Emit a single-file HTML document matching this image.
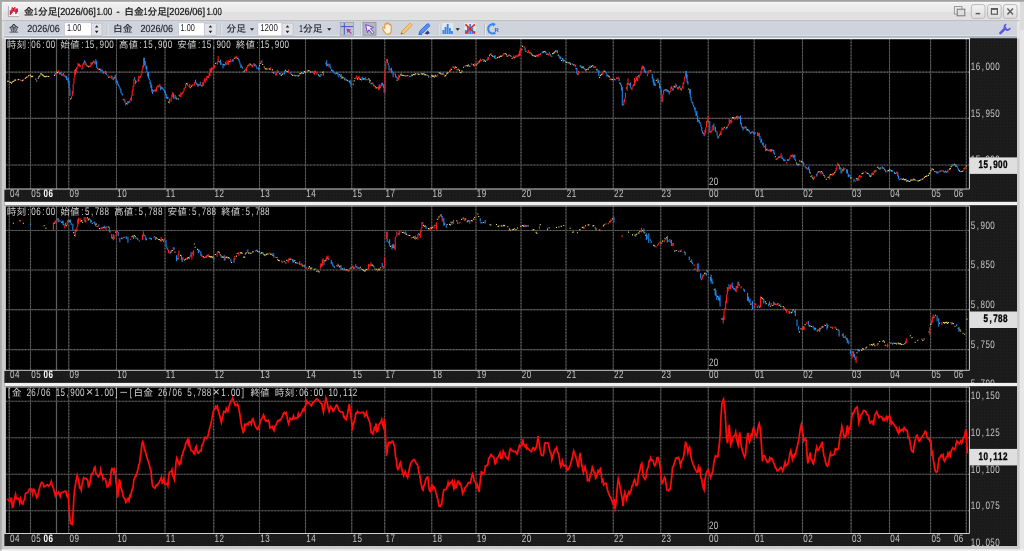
<!DOCTYPE html>
<html lang="ja">
<head>
<meta charset="utf-8">
<title>金1分足[2026/06]1.00 - 白金1分足[2026/06]1.00</title>
<style>
html,body{margin:0;padding:0;background:#cbcbcb;overflow:hidden}
body{width:1024px;height:551px;font-family:"Liberation Sans","IPAGothic",sans-serif}
svg{display:block;position:absolute;left:0;top:0;will-change:transform;filter:blur(0.35px)}
text{white-space:pre}
</style>
</head>
<body>
<svg width="1024" height="551" viewBox="0 0 1024 551" text-rendering="geometricPrecision">
<rect x="0" y="0" width="1024" height="551" fill="#cbcbcb"/>
<defs><linearGradient id="tg" x1="0" y1="0" x2="0" y2="1"><stop offset="0" stop-color="#f1f1f1"/><stop offset="0.5" stop-color="#eaeaea"/><stop offset="0.56" stop-color="#e0e0e0"/><stop offset="1" stop-color="#e1e1e1"/></linearGradient><linearGradient id="bg" x1="0" y1="0" x2="0" y2="1"><stop offset="0" stop-color="#f4f4f4"/><stop offset="1" stop-color="#dcdcdc"/></linearGradient></defs>
<rect x="1019.6" y="0" width="4.4" height="551" fill="#e7e7ea"/>
<rect x="1019.6" y="0" width="4.4" height="30" fill="#dcdcdc"/>
<rect x="1.8" y="549.2" width="1023" height="1.8" fill="#f1f1f1"/>
<rect x="1.8" y="1.8" width="1017.8" height="18.7" fill="url(#tg)"/>
<rect x="1.8" y="20.4" width="2.6" height="18" fill="#dedede"/>
<rect x="1016.8" y="20.4" width="2.8" height="18" fill="#e6e6e6"/>
<rect x="1.8" y="1.8" width="1017.8" height="1" fill="#f8f8f8"/>
<rect x="1.8" y="1.8" width="1" height="18.7" fill="#f4f4f4"/>
<rect x="1018.6" y="1.8" width="1" height="18.7" fill="#f4f4f4"/>
<rect x="0" y="0" width="1024" height="1.7" fill="#a2a2a2"/>
<rect x="0" y="0" width="1.8" height="549.5" fill="#a8a8a8"/>
<rect x="4.4" y="20.4" width="1012.6" height="17.8" fill="#cfd3db"/>
<rect x="1.8" y="20" width="1017.8" height="0.9" fill="#bdbdbd"/>
<rect x="4.4" y="35" width="1012.6" height="1.2" fill="#dde0e6"/>
<rect x="4.4" y="36.2" width="1012.6" height="1.6" fill="#a9aeba"/>
<g><rect x="8.4" y="6.2" width="10.2" height="10.2" fill="#f6f6f6"/><path d="M8.4 6v10.600h10.400" stroke="#9c9c9c" stroke-width="0.8" fill="none"/><path d="M10.4 15V10.5M12.2 13V7.200M14.8 12V7M16.600 13.500V8.500" stroke="#e8202a" stroke-width="1.4"/><path d="M11.300 14V9.500M13.500 11.500V8M15.700 14V9.500M17.500 12V8.500" stroke="#2a50e0" stroke-width="1.1"/></g>
<g fill="#101010" stroke="#101010" stroke-width="0.22"><text x="24" y="14.5" font-family='"Liberation Sans","IPAGothic",sans-serif' font-size="9.74" textLength="9.74" lengthAdjust="spacing">金</text><text x="34" y="14.5" font-family='"Liberation Sans",sans-serif' font-size="10.2" textLength="3.6" lengthAdjust="spacingAndGlyphs">1</text><text x="38" y="14.5" font-family='"Liberation Sans","IPAGothic",sans-serif' font-size="9.74" textLength="19.48" lengthAdjust="spacing">分足</text><text x="57.6" y="14.5" font-family='"Liberation Sans",sans-serif' font-size="10.2" textLength="38.2" lengthAdjust="spacingAndGlyphs">[2026/06]</text><text x="96.6" y="14.5" font-family='"Liberation Sans",sans-serif' font-size="10.2" textLength="15.6" lengthAdjust="spacingAndGlyphs">1.00</text><text x="116.4" y="14.5" font-family='"Liberation Sans",sans-serif' font-size="10.2" textLength="3.2" lengthAdjust="spacingAndGlyphs">-</text><text x="124.3" y="14.5" font-family='"Liberation Sans","IPAGothic",sans-serif' font-size="9.74" textLength="19.48" lengthAdjust="spacing">白金</text><text x="143.8" y="14.5" font-family='"Liberation Sans",sans-serif' font-size="10.2" textLength="3.6" lengthAdjust="spacingAndGlyphs">1</text><text x="147.6" y="14.5" font-family='"Liberation Sans","IPAGothic",sans-serif' font-size="9.74" textLength="19.48" lengthAdjust="spacing">分足</text><text x="166.8" y="14.5" font-family='"Liberation Sans",sans-serif' font-size="10.2" textLength="38.2" lengthAdjust="spacingAndGlyphs">[2026/06]</text><text x="206.6" y="14.5" font-family='"Liberation Sans",sans-serif' font-size="10.2" textLength="15.2" lengthAdjust="spacingAndGlyphs">1.00</text></g>
<rect x="971.4" y="4.6" width="13.6" height="13.8" rx="2.4" fill="url(#bg)" stroke="#b4b4b4" stroke-width="0.9"/>
<rect x="987.6" y="4.6" width="13.6" height="13.8" rx="2.4" fill="url(#bg)" stroke="#b4b4b4" stroke-width="0.9"/>
<rect x="1003.4" y="4.6" width="13.6" height="13.8" rx="2.4" fill="url(#bg)" stroke="#b4b4b4" stroke-width="0.9"/>
<path d="M975.6 13.6h4.6" stroke="#5c5c5c" stroke-width="1.5"/>
<rect x="991.4" y="8.6" width="6" height="5.6" fill="none" stroke="#5c5c5c" stroke-width="1.2"/><path d="M991.4 9h6" stroke="#5c5c5c" stroke-width="1.8"/>
<path d="M1007.4 8.6l5.6 5.8M1013 8.6l-5.6 5.8" stroke="#5c5c5c" stroke-width="1.4"/>
<rect x="954.4" y="6.6" width="7.6" height="7.4" fill="#ececec" stroke="#8e8e8e" stroke-width="0.9"/><rect x="957.2" y="9.2" width="7.6" height="6.6" fill="#dedede" stroke="#777" stroke-width="1"/>
<g stroke="#5a58e2" fill="none" stroke-linecap="round"><path d="M1000.4 33.2l5-5" stroke-width="2.6"/><path d="M1005.6 24.6a3 3 0 1 0 4.2 4.2" stroke-width="1.8"/></g>
<g fill="#202430" stroke="#202430" stroke-width="0.15"><text x="9" y="32.4" font-family='"Liberation Sans","IPAGothic",sans-serif' font-size="9.74" textLength="9.74" lengthAdjust="spacing">金</text><text x="27.2" y="32.4" font-family='"Liberation Sans",sans-serif' font-size="10.2" textLength="32.6" lengthAdjust="spacingAndGlyphs">2026/06</text></g>
<rect x="64.7" y="22.8" width="26.7" height="13" fill="#ffffff" stroke="#c0c4cc" stroke-width="0.6"/>
<rect x="91.4" y="23.2" width="10.6" height="12.2" fill="#e1e3e8" stroke="#b8bcc4" stroke-width="0.6"/>
<path d="M94.9 27.6h3.6l-1.8-2.4zM94.9 30.8h3.6l-1.8 2.4z" fill="#222"/>
<g fill="#1a1a1a"><text x="67" y="30.5" font-family='"Liberation Sans",sans-serif' font-size="10" textLength="14.2" lengthAdjust="spacingAndGlyphs">1.00</text></g>
<rect x="106.8" y="23.4" width="0.8" height="11.4" fill="#b4b8c0"/><rect x="107.6" y="23.4" width="0.8" height="11.4" fill="#eef0f4"/>
<g fill="#202430" stroke="#202430" stroke-width="0.15"><text x="113" y="32.4" font-family='"Liberation Sans","IPAGothic",sans-serif' font-size="9.74" textLength="19.48" lengthAdjust="spacing">白金</text><text x="140.4" y="32.4" font-family='"Liberation Sans",sans-serif' font-size="10.2" textLength="32.6" lengthAdjust="spacingAndGlyphs">2026/06</text></g>
<rect x="178.7" y="22.8" width="26" height="13" fill="#ffffff" stroke="#c0c4cc" stroke-width="0.6"/>
<rect x="204.7" y="23.2" width="11.5" height="12.2" fill="#e1e3e8" stroke="#b8bcc4" stroke-width="0.6"/>
<path d="M208.65 27.6h3.6l-1.8-2.4zM208.65 30.8h3.6l-1.8 2.4z" fill="#222"/>
<g fill="#1a1a1a"><text x="180.6" y="30.5" font-family='"Liberation Sans",sans-serif' font-size="10" textLength="14.2" lengthAdjust="spacingAndGlyphs">1.00</text></g>
<rect x="220.6" y="23.4" width="0.8" height="11.4" fill="#b4b8c0"/><rect x="221.4" y="23.4" width="0.8" height="11.4" fill="#eef0f4"/>
<g fill="#202430" stroke="#202430" stroke-width="0.15"><text x="226.4" y="32.4" font-family='"Liberation Sans","IPAGothic",sans-serif' font-size="9.74" textLength="19.48" lengthAdjust="spacing">分足</text></g>
<path d="M249.9 28.2h4.2l-2.1 2.6z" fill="#222"/>
<rect x="258" y="22.8" width="24" height="13" fill="#ffffff" stroke="#c0c4cc" stroke-width="0.6"/>
<rect x="282" y="23.2" width="11" height="12.2" fill="#e1e3e8" stroke="#b8bcc4" stroke-width="0.6"/>
<path d="M285.7 27.6h3.6l-1.8-2.4zM285.7 30.8h3.6l-1.8 2.4z" fill="#222"/>
<g fill="#1a1a1a"><text x="260.2" y="30.5" font-family='"Liberation Sans",sans-serif' font-size="10" textLength="17.6" lengthAdjust="spacingAndGlyphs">1200</text></g>
<g fill="#202430" stroke="#202430" stroke-width="0.15"><text x="299.2" y="32.4" font-family='"Liberation Sans",sans-serif' font-size="10.2" textLength="3.6" lengthAdjust="spacingAndGlyphs">1</text><text x="303" y="32.4" font-family='"Liberation Sans","IPAGothic",sans-serif' font-size="9.74" textLength="19.48" lengthAdjust="spacing">分足</text></g>
<path d="M327.1 28.2h4.2l-2.1 2.6z" fill="#222"/>
<rect x="337.8" y="23.4" width="0.8" height="11.4" fill="#b4b8c0"/><rect x="338.6" y="23.4" width="0.8" height="11.4" fill="#eef0f4"/>
<rect x="340.2" y="22.4" width="13.3" height="12.8" fill="#c2c6ce" stroke="#9a9ea8" stroke-width="0.8"/><path d="M344.3 23v11.6M340.8 26.6h12.2" stroke="#3f56c8" stroke-width="1"/><path d="M346.4 28.4l5.2 1.4-2 .9 2.2 2.6-1 .8-2.2-2.6-1 1.9z" fill="#9a3cc0"/>
<rect x="360.6" y="23.4" width="0.8" height="11.4" fill="#b4b8c0"/><rect x="361.4" y="23.4" width="0.8" height="11.4" fill="#eef0f4"/>
<rect x="363" y="22.4" width="13" height="12.8" fill="#b3b7c0" stroke="#8c909a" stroke-width="0.8"/><path d="M365.6 24.6l7.8 2.8-3 1.2 3.6 4-1.6 1.4-3.6-4.2-1.4 2.8z" fill="#f4f0ff" stroke="#7a3fd0" stroke-width="1"/>
<path d="M383 29.2c-1.2-1.4 .2-2.6 1.2-1.6l.6 .6v-3.4c0-1.2 1.6-1.2 1.6 0v-1c0-1.2 1.7-1.2 1.7 0v.8c0-1.1 1.6-1.1 1.6 0v1c0-1 1.5-1 1.5 .1v4.6c0 2.4-1.2 4-3.6 4-2 0-3-1.200-4.600-5.100z" fill="#fbf3e4" stroke="#e09a3a" stroke-width="1.1"/>
<path d="M401 34.200l1-3.200 7.600-7.400c.8-.8 3 1.200 2.200 2l-7.600 7.600z" fill="#f6c878" stroke="#e09a3a" stroke-width="0.9"/><path d="M401 34.200l.6-1.800 1.200 1.200z" fill="#555"/>
<path d="M419 33.600l1.200-3 7-6.600c1-.9 3.200 1.300 2.300 2.200l-6.800 6.800z" fill="#5a8ff0" stroke="#2f62d8" stroke-width="0.9"/><path d="M424.600 33.600l3.200-3 2 2.400-2.400 1.400z" fill="#24408c"/><path d="M418.600 34.400h3.400" stroke="#2f62d8" stroke-width="1"/>
<rect x="437.8" y="23.4" width="0.8" height="11.4" fill="#b4b8c0"/><rect x="438.6" y="23.4" width="0.8" height="11.4" fill="#eef0f4"/>
<rect x="442" y="22.8" width="11.4" height="11.6" fill="#e4e7ec"/>
<path d="M443.4 34v-4M445.5 34v-7M447.7 34v-10M449.9 34v-6M452 34v-3" stroke="#2f86f0" stroke-width="1.8"/>
<path d="M455.6 28.2h4.2l-2.1 2.6z" fill="#222"/>
<rect x="464.4" y="22.8" width="11.4" height="11.6" fill="#e4e7ec"/>
<path d="M465.8 34v-4M467.9 34v-7M470.1 34v-10M472.3 34v-6M474.4 34v-3" stroke="#2f86f0" stroke-width="1.8"/>
<path d="M465.4 24.400l9.400 8.800M474.800 24.400l-9.400 8.800" stroke="#f02020" stroke-width="1.5"/>
<rect x="484.2" y="23.4" width="0.8" height="11.4" fill="#b4b8c0"/><rect x="485" y="23.4" width="0.8" height="11.4" fill="#eef0f4"/>
<g fill="none" stroke="#2f86f0"><path d="M495.4 32.600a4.600 4.600 0 1 1 -1.600 -8.200" stroke-width="2"/></g><path d="M492 22.400l3.800 1.600-2.600 2.800z" fill="#2f86f0"/><text x="494.6" y="31.600" font-family='"Liberation Sans",sans-serif' font-size="6" font-weight="bold" fill="#2f66e0">R</text>
<pattern id="dt" width="3.24" height="3.24" patternUnits="userSpaceOnUse"><rect width="3.24" height="3.24" fill="#1c1c1c"/><rect x="0.8" y="0.8" width="0.9" height="0.9" fill="#111111"/></pattern>
<rect x="4.4" y="38.2" width="1012.6" height="507.8" fill="url(#dt)"/>
<rect x="4.4" y="201.8" width="1012.6" height="3.4" fill="#f1f1f1"/>
<rect x="4.4" y="382.9" width="1012.6" height="3.3" fill="#f1f1f1"/>
<clipPath id="cp0"><rect x="5" y="38.1" width="1012" height="163.7"/></clipPath>
<rect x="5.9" y="38.7" width="963.5" height="150.3" fill="#000"/>
<path d="M9.25 38.7V189M30.5 38.7V189M56.5 38.7V189M68.75 38.7V189M116.5 38.7V189M165 38.7V189M213.75 38.7V189M259.5 38.7V189M305.5 38.7V189M351.75 38.7V189M384.75 38.7V189M431.75 38.7V189M476 38.7V189M521 38.7V189M566 38.7V189M613.25 38.7V189M660.75 38.7V189M708.25 38.7V189M754.2 38.7V189M802.5 38.7V189M851.1 38.7V189M889.5 38.7V189M930.6 38.7V189M966.3 38.7V189" stroke="#444444" stroke-width="1.1" fill="none"/>
<path d="M9.25 38.7V189M30.5 38.7V189M56.5 38.7V189M68.75 38.7V189M116.5 38.7V189M165 38.7V189M213.75 38.7V189M259.5 38.7V189M305.5 38.7V189M351.75 38.7V189M384.75 38.7V189M431.75 38.7V189M476 38.7V189M521 38.7V189M566 38.7V189M613.25 38.7V189M660.75 38.7V189M708.25 38.7V189M754.2 38.7V189M802.5 38.7V189M851.1 38.7V189M889.5 38.7V189M930.6 38.7V189M966.3 38.7V189" stroke="#6c6c6c" stroke-width="1.1" stroke-dasharray="0.81 2.43" fill="none"/>
<path d="M56.5 38.7V189" stroke="#5c5c5c" stroke-width="1.2"/>
<path d="M5.9 72.15H969.4M5.9 118.4H969.4M5.9 165H969.4" stroke="#444444" stroke-width="1.1" fill="none"/>
<path d="M5.9 72.15H969.4M5.9 118.4H969.4M5.9 165H969.4" stroke="#6c6c6c" stroke-width="1.1" stroke-dasharray="0.81 2.43" fill="none"/>
<clipPath id="cp1"><rect x="5" y="205.4" width="1012" height="177.5"/></clipPath>
<rect x="5.9" y="206" width="963.5" height="164.3" fill="#000"/>
<path d="M9.25 206V370.3M30.5 206V370.3M56.5 206V370.3M68.75 206V370.3M116.5 206V370.3M165 206V370.3M213.75 206V370.3M259.5 206V370.3M305.5 206V370.3M351.75 206V370.3M384.75 206V370.3M431.75 206V370.3M476 206V370.3M521 206V370.3M566 206V370.3M613.25 206V370.3M660.75 206V370.3M708.25 206V370.3M754.2 206V370.3M802.5 206V370.3M851.1 206V370.3M889.5 206V370.3M930.6 206V370.3M966.3 206V370.3" stroke="#444444" stroke-width="1.1" fill="none"/>
<path d="M9.25 206V370.3M30.5 206V370.3M56.5 206V370.3M68.75 206V370.3M116.5 206V370.3M165 206V370.3M213.75 206V370.3M259.5 206V370.3M305.5 206V370.3M351.75 206V370.3M384.75 206V370.3M431.75 206V370.3M476 206V370.3M521 206V370.3M566 206V370.3M613.25 206V370.3M660.75 206V370.3M708.25 206V370.3M754.2 206V370.3M802.5 206V370.3M851.1 206V370.3M889.5 206V370.3M930.6 206V370.3M966.3 206V370.3" stroke="#6c6c6c" stroke-width="1.1" stroke-dasharray="0.81 2.43" fill="none"/>
<path d="M56.5 206V370.3" stroke="#5c5c5c" stroke-width="1.2"/>
<path d="M5.9 230.5H969.4M5.9 270H969.4M5.9 309.6H969.4M5.9 349.6H969.4" stroke="#444444" stroke-width="1.1" fill="none"/>
<path d="M5.9 230.5H969.4M5.9 270H969.4M5.9 309.6H969.4M5.9 349.6H969.4" stroke="#6c6c6c" stroke-width="1.1" stroke-dasharray="0.81 2.43" fill="none"/>
<clipPath id="cp2"><rect x="5" y="386.4" width="1012" height="159.6"/></clipPath>
<rect x="5.9" y="387" width="963.5" height="146.5" fill="#000"/>
<path d="M9.25 387V533.5M30.5 387V533.5M56.5 387V533.5M68.75 387V533.5M116.5 387V533.5M165 387V533.5M213.75 387V533.5M259.5 387V533.5M305.5 387V533.5M351.75 387V533.5M384.75 387V533.5M431.75 387V533.5M476 387V533.5M521 387V533.5M566 387V533.5M613.25 387V533.5M660.75 387V533.5M708.25 387V533.5M754.2 387V533.5M802.5 387V533.5M851.1 387V533.5M889.5 387V533.5M930.6 387V533.5M966.3 387V533.5" stroke="#444444" stroke-width="1.1" fill="none"/>
<path d="M9.25 387V533.5M30.5 387V533.5M56.5 387V533.5M68.75 387V533.5M116.5 387V533.5M165 387V533.5M213.75 387V533.5M259.5 387V533.5M305.5 387V533.5M351.75 387V533.5M384.75 387V533.5M431.75 387V533.5M476 387V533.5M521 387V533.5M566 387V533.5M613.25 387V533.5M660.75 387V533.5M708.25 387V533.5M754.2 387V533.5M802.5 387V533.5M851.1 387V533.5M889.5 387V533.5M930.6 387V533.5M966.3 387V533.5" stroke="#6c6c6c" stroke-width="1.1" stroke-dasharray="0.81 2.43" fill="none"/>
<path d="M56.5 387V533.5" stroke="#5c5c5c" stroke-width="1.2"/>
<path d="M5.9 401.2H969.4M5.9 437.7H969.4M5.9 474.3H969.4M5.9 510.8H969.4" stroke="#444444" stroke-width="1.1" fill="none"/>
<path d="M5.9 401.2H969.4M5.9 437.7H969.4M5.9 474.3H969.4M5.9 510.8H969.4" stroke="#6c6c6c" stroke-width="1.1" stroke-dasharray="0.81 2.43" fill="none"/>
<g clip-path="url(#cp0)" fill="none" stroke-width="1.1"><path d="M7.51 80.73V81.83M8.32 80.75V81.85M9.94 81.65V82.75M10.75 81.86V82.96M11.56 82.71V83.81M12.37 81.51V82.61M13.18 80.95V82.05M13.99 80.48V81.58M14.8 79.45V80.55M15.61 79.58V80.68M18.04 79.27V80.37M18.85 78.92V80.02M22.09 80.06V81.16M22.9 79.67V80.77M25.33 77.92V79.02M26.14 76.98V78.08M26.95 76.49V77.59M28.57 75.1V76.2M30.19 74.73V75.83M31 75.63V76.73M31.81 76.06V77.16M32.62 75.82V76.92M36.67 80.5V81.6M38.29 77.56V78.66M39.1 76.04V77.14M39.91 75.13V76.23M40.72 73.35V74.45M41.53 73.51V74.61M42.34 74.32V75.42M43.15 74.8V75.9M43.96 75.75V76.85M44.77 76.09V77.19M45.58 76.25V77.35M46.39 75.8V76.9M48.01 75.92V77.02M48.82 75.96V77.06M54.49 74.87V75.97M55.3 73.46V74.56M56.92 71.57V72.67M57.73 72.08V73.18M70.69 98.3V99.4M86.08 63.4V64.5M86.89 65.21V66.31M88.51 66.1V67.2M92.56 62.5V63.6M99.04 68.91V70.01M99.85 68.56V69.66M103.9 72.25V73.35M108.76 76.72V77.82M114.43 77.18V78.28M123.34 99.19V100.29M126.58 103.02V104.12M154.12 90.25V91.35M158.98 86.24V87.34M168.7 101.53V102.63M175.99 96.76V97.86M176.8 98.31V99.41M179.23 94.71V95.81M186.52 83.04V84.14M190.57 87.26V88.36M191.38 85.58V86.68M198.67 84.47V85.57M201.91 85.35V86.45M215.68 62.81V63.91M218.92 60.97V62.07M223.78 64.08V65.18M226.21 63.49V64.59M229.45 60.98V62.08M234.31 57.7V58.8M237.55 57.63V58.73M244.03 71.24V72.34M244.84 69.76V70.86M248.08 65.04V66.14M250.51 63.68V64.78M251.32 64.73V65.83M259.42 65.15V66.25M260.23 62.89V63.99M262.66 63.89V64.99M264.28 66.38V67.48M265.09 68.25V69.35M265.9 68.28V69.38M266.71 68.4V69.5M269.14 68.15V69.25M269.95 68.81V69.91M272.38 69.32V70.42M273.19 71.92V73.02M279.67 73.18V74.28M281.29 75.01V76.11M282.1 73.89V74.99M282.91 73.26V74.36M285.34 69.64V70.74M286.15 70.64V71.74M287.77 71.08V72.18M291.82 73.93V75.03M292.63 74.89V75.99M294.25 74.77V75.87M295.87 74.88V75.98M298.3 75.52V76.62M299.11 74.7V75.8M299.92 72.91V74.01M300.73 73.26V74.36M301.54 72.25V73.35M303.16 73.01V74.11M303.97 71.43V72.53M304.78 71.08V72.18M305.59 72.2V73.3M308.02 70.5V71.6M308.83 70.08V71.18M310.45 71.47V72.57M312.07 71.41V72.51M316.93 73.45V74.55M319.36 75.45V76.55M320.98 74.34V75.44M322.6 71.85V72.95M327.46 64.45V65.55M331.51 69.6V70.7M336.37 72.71V73.81M339.61 74.27V75.37M340.42 75.51V76.61M342.04 76.57V77.67M342.85 77.35V78.45M346.09 79.35V80.45M347.71 80.03V81.13M349.33 81.09V82.19M354.19 80.36V81.46M355 77.91V79.01M357.43 78.31V79.41M359.86 78.29V79.39M360.67 78.95V80.05M363.1 78.71V79.81M363.91 78.07V79.17M368.77 78.33V79.43M370.39 80.24V81.34M371.2 83.08V84.18M375.25 86.16V87.26M376.06 87.5V88.6M376.87 87.18V88.28M380.11 86.53V87.63M397.12 79.6V80.7M397.93 77.6V78.7M400.36 74.4V75.5M401.17 73.52V74.62M401.98 74.86V75.96M402.79 74.7V75.8M403.6 74.92V76.02M405.22 75.24V76.34M407.65 74.99V76.09M410.08 75.69V76.79M411.7 74.55V75.65M412.51 74.63V75.73M413.32 73.96V75.06M414.13 73.71V74.81M414.94 74.19V75.29M415.75 73.24V74.34M418.18 73.58V74.68M418.99 73.92V75.02M421.42 73.2V74.3M422.23 73.61V74.71M423.04 73.3V74.4M423.85 73.27V74.37M424.66 74.17V75.27M425.47 74.08V75.18M427.9 74.95V76.05M428.71 76.38V77.48M431.95 75.11V76.21M432.76 75.83V76.93M433.57 75.56V76.66M434.38 76.39V77.49M435.19 74.78V75.88M436 75.88V76.98M439.24 72.32V73.42M440.05 72.46V73.56M440.86 73.35V74.45M442.48 73.48V74.58M444.91 75.55V76.65M445.72 74.93V76.03M446.53 73.42V74.52M447.34 72.6V73.7M448.15 72.24V73.34M449.77 70.55V71.65M451.39 68.87V69.97M453.01 66.47V67.57M455.44 66.53V67.63M456.25 67.02V68.12M457.06 69.17V70.27M458.68 68.85V69.95M459.49 70.04V71.14M460.3 71.92V73.02M461.11 72.24V73.34M461.92 70.53V71.63M463.54 66.66V67.76M466.78 64.92V66.02M467.59 65.28V66.38M468.4 64.6V65.7M473.26 64.05V65.15M474.07 65.06V66.16M476.5 64.51V65.61M477.31 63.2V64.3M478.93 61.66V62.76M479.74 60.54V61.64M482.98 59.23V60.33M484.6 59.72V60.82M485.41 60.81V61.91M487.03 59.44V60.54M489.46 55.19V56.29M490.27 53.87V54.97M491.89 54.9V56M492.7 55.75V56.85M495.94 57.76V58.86M497.56 57.09V58.19M499.18 56.82V57.92M499.99 55.95V57.05M500.8 55.62V56.72M501.61 55.73V56.83M504.04 53.25V54.35M505.66 53.08V54.18M506.47 54.18V55.28M507.28 55.74V56.84M508.9 54.84V55.94M512.14 57.99V59.09M514.57 57.05V58.15M516.19 55.51V56.61M521.86 48.66V49.76M522.67 45.78V46.88M525.91 50.65V51.75M530.77 52.44V53.54M532.39 54.54V55.64M533.2 55.26V56.36M534.82 55.37V56.47M535.63 55.83V56.93M537.25 55.05V56.15M542.92 51.6V52.7M543.73 51.33V52.43M544.54 50.91V52.01M546.97 53.75V54.85M552.64 53.06V54.16M553.45 52.76V53.86M554.26 52.05V53.15M555.07 51.08V52.18M555.88 50.13V51.23M558.31 54.59V55.69M561.55 59.98V61.08M562.36 58.34V59.44M563.98 59.78V60.88M566.41 61.79V62.89M568.03 62.11V63.21M569.65 62.32V63.42M570.46 63.53V64.63M576.13 68.08V69.18M577.75 73.66V74.76M580.18 65.51V66.61M581.8 67.22V68.32M582.61 66.53V67.63M585.04 68.75V69.85M585.85 70.14V71.24M586.66 68.97V70.07M588.28 68.55V69.65M589.09 66.99V68.09M590.71 66.66V67.76M591.52 66.02V67.12M592.33 65.09V66.19M593.95 66.65V67.75M596.38 69.21V70.31M599.62 76.85V77.95M600.43 74.91V76.01M601.24 74.15V75.25M602.05 73.6V74.7M604.48 70.83V71.93M608.53 75.4V76.5M609.34 76.33V77.43M610.15 78.77V79.87M611.77 79.1V80.2M612.58 78.97V80.07M614.2 78.79V79.89M619.87 82.57V83.67M623.11 104.26V105.36M626.35 87.49V88.59M628.78 83.47V84.57M650.65 70.18V71.28M656.32 79.95V81.05M666.04 88.98V90.08M667.66 90.24V91.34M674.14 85.86V86.96M674.95 86.62V87.72M677.38 87.49V88.59M680.62 88.48V89.58M688.72 88.47V89.57M691.96 101.38V102.48M703.3 132.7V133.8M708.97 121.21V122.31M713.02 125.38V126.48M718.69 136.38V137.48M719.5 134.39V135.49M724.36 126.7V127.8M726.79 127.05V128.15M732.46 116.96V118.06M733.27 117.48V118.58M734.08 117.28V118.38M736.51 116.6V117.7M743.8 127.39V128.49M745.42 126.46V127.56M747.04 129.36V130.46M747.85 129.26V130.36M751.09 132.09V133.19M764.05 146.21V147.31M766.48 149.1V150.2M769.72 149.72V150.82M775.39 156.14V157.24M776.2 158.66V159.76M787.54 159.44V160.54M791.59 155.46V156.56M796.45 162.44V163.54M797.26 163.74V164.84M798.88 163.86V164.96M799.69 160.42V161.52M801.31 160.79V161.89M802.12 161.62V162.72M810.22 172.34V173.44M811.03 175.78V176.88M812.65 177.3V178.4M818.32 171.38V172.48M819.13 171.2V172.3M821.56 171.11V172.21M823.99 175.02V176.12M824.8 176.41V177.51M826.42 178.69V179.79M828.04 176.64V177.74M828.85 176.74V177.84M830.47 174.12V175.22M831.28 174.02V175.12M833.71 173.54V174.64M834.52 172.21V173.31M838.57 164.49V165.59M840.19 167.49V168.59M842.62 169.55V170.65M850.72 177.36V178.46M856.39 178.03V179.13M858.01 178.29V179.39M862.06 173.08V174.18M862.87 172.71V173.81M866.92 172.45V173.55M867.73 172.9V174M870.16 175.87V176.97M870.97 175.28V176.38M871.78 173.42V174.52M874.21 171.34V172.44M875.83 170.33V171.43M877.45 166.76V167.86M879.07 167.83V168.93M880.69 167.48V168.58M883.12 167.53V168.63M884.74 169.26V170.36M887.98 169.88V170.98M888.79 170.06V171.16M889.6 169.17V170.27M891.22 170.28V171.38M892.03 170.5V171.6M895.27 172.96V174.06M900.94 178.49V179.59M902.56 178.97V180.07M903.37 178.25V179.35M904.18 179.05V180.15M904.99 179.37V180.47M905.8 178.83V179.93M906.61 180.59V181.69M907.42 180.05V181.15M909.04 180.99V182.09M909.85 180.97V182.07M910.66 179.61V180.71M911.47 179.5V180.6M912.28 179.51V180.61M913.09 179.38V180.48M913.9 178.62V179.72M914.71 179.39V180.49M917.95 180.14V181.24M918.76 180.47V181.57M919.57 179.97V181.07M920.38 179.4V180.5M922 178.74V179.84M922.81 178.47V179.57M924.43 176.94V178.04M925.24 175.92V177.02M926.05 175.95V177.05M926.86 175.32V176.42M928.48 174.82V175.92M929.29 173.06V174.16M930.1 172.39V173.49M930.91 170.05V171.15M932.53 168.52V169.62M933.34 169.11V170.21M934.96 171.12V172.22M943.06 170.52V171.62M945.49 170.65V171.75M949.54 168.53V169.63M950.35 168.11V169.21M951.16 166.05V167.15M951.97 164.46V165.56M954.4 163.77V164.87M955.21 164.52V165.62M956.02 165.94V167.04M959.26 169.96V171.06M960.07 170.99V172.09M961.69 171.02V172.12M962.5 170.71V171.81M964.12 168.26V169.36M966.55 165.49V166.59" stroke="#ead868"/><path d="M35.86 78.36V80.04M47.2 75.69V77M59.35 72.29V74.6M60.16 72.25V73.95M60.97 72.3V74.39M61.78 74V75.87M63.4 72.96V75.59M64.21 75.36V77.06M65.83 76.19V77.89M66.64 75.79V80.08M68.26 77.82V83.35M69.07 81.1V88.42M69.88 88.42V96.01M75.55 68.89V74.8M79.6 63.87V66.57M82.03 67.88V69.58M84.46 60.15V63.35M94.18 61.1V62.8M95.8 59.23V64.27M96.61 61.21V67.72M97.42 67.4V69.1M100.66 69.11V71.46M102.28 69.68V71.38M103.09 71.22V73.78M105.52 70.72V73.71M106.33 73.21V74.91M112 75.75V79.36M115.24 74.83V78.5M116.05 78.5V83.56M116.86 80.13V81.83M117.67 81.32V84.57M118.48 84.18V85.88M119.29 85.65V87.62M120.1 87.62V89.68M120.91 89.31V92.94M121.72 92.63V94.33M122.53 93.81V95.51M124.96 99.48V102.64M125.77 102.64V105.32M128.2 101.13V103.29M129.01 101.32V103.02M134.68 77.27V79.99M135.49 79.99V84.06M136.3 80.9V82.6M144.4 57.82V65.82M145.21 60.96V65.33M146.02 65.33V68.98M146.83 66.32V71.9M147.64 71.9V76.58M148.45 71.95V78.4M149.26 78.21V79.91M150.07 79.88V84.04M150.88 82.52V87.82M151.69 84.75V91.82M152.5 89.26V94.07M160.6 85.69V90.22M162.22 86.93V88.63M163.03 88.04V89.84M163.84 89.16V90.86M164.65 90.13V92.88M165.46 91.57V95.25M166.27 93.92V98.23M167.08 96.94V98.93M167.89 96.78V99.11M173.56 93.37V98.63M175.18 94.77V99.25M178.42 97.93V99.67M187.33 82.72V85.56M195.43 79.69V83.1M196.24 82.36V84.06M197.05 83.27V84.97M197.86 83.99V86.67M200.29 81.82V85.81M219.73 60.94V62.64M220.54 59.83V64.67M222.97 63.87V68.42M224.59 63.94V65.64M227.83 62.24V64.52M231.07 60.56V62.26M232.69 59.37V61.85M238.36 58.18V60.29M239.17 59.48V62.35M239.98 62.35V64.54M240.79 64.54V67.7M242.41 66.65V68.67M245.65 68.8V70.5M249.7 63.36V65.49M254.56 64.3V66.29M256.18 65.17V67.45M256.99 67.31V69.01M258.61 67.37V70.35M261.85 60.2V63.36M274 71.53V74.04M278.05 70.72V72.96M280.48 73.25V74.5M284.53 71.11V74.4M290.2 72.08V73.83M295.06 75.23V76.48M296.68 75.06V76.31M302.35 72.24V73.49M309.64 70.25V71.5M312.88 71.34V72.59M313.69 72.5V73.75M315.31 70.38V72.91M318.55 74.11V76.02M320.17 75.67V76.92M323.41 71.05V75.46M325.84 62.79V64.49M326.65 60.17V66.48M328.27 64.29V65.99M329.89 63.79V66.49M330.7 66.49V68.75M332.32 69.81V71.51M333.13 70.18V71.88M333.94 71.51V73.21M334.75 72.56V73.81M335.56 73.2V74.45M337.18 72.29V73.88M337.99 72.13V76.09M338.8 75.95V77.2M341.23 74.1V78.95M343.66 76.84V78.09M344.47 77.98V80.24M346.9 79.45V80.7M350.14 79.86V83.66M350.95 82.19V86.77M362.29 76.81V79.45M364.72 78.39V79.64M366.34 78.97V80.22M367.96 79.03V80.28M369.58 78.88V82.93M372.82 82.87V84.57M373.63 84.43V86.13M377.68 87.04V88.29M379.3 84.17V89.4M381.73 82.71V85.88M382.54 82.86V85.26M383.35 84.34V87.66M384.16 85.51V92.8M387.4 59.03V62.88M388.21 62.68V65.47M389.02 65.42V69.95M390.64 68.42V70.12M391.45 67.76V73.24M392.26 70.43V72.13M393.07 72.1V77.34M395.5 73.57V77.14M396.31 76.28V78.22M399.55 75.4V77.5M404.41 74.94V76.19M409.27 76.03V77.28M410.89 75.66V76.91M419.8 73.42V74.67M426.28 74.4V75.65M431.14 75.96V77.6M437.62 74.48V75.73M441.67 73.29V74.54M443.29 72.46V74.79M453.82 66.64V67.89M465.16 65.6V66.85M469.21 65.15V67M470.02 65.49V67.1M475.69 63.65V64.9M481.36 59.92V61.17M483.79 59.78V62.01M493.51 56.08V57.33M494.32 55.52V58.62M495.13 55.17V57.44M510.52 55.07V56.41M525.1 48V50.55M527.53 51.63V52.88M529.15 51.77V53.02M529.96 52.38V53.63M531.58 52.99V54.89M534.01 55.26V56.51M539.68 53.83V55.08M542.11 52.06V53.31M545.35 50.66V53.04M546.16 52.49V53.74M547.78 53.24V54.52M549.4 52.33V54.17M550.21 54.09V55.94M551.83 55.69V56.94M556.69 50.68V52.36M557.5 50.19V53.15M559.12 55.14V57.17M559.93 56.78V58.99M560.74 56.61V59.32M563.17 58.57V62.5M564.79 59.99V61.24M565.6 60.93V63.01M568.84 62.21V63.46M572.08 63.2V64.45M572.89 63.71V64.96M573.7 64.05V65.75M575.32 65.02V67M576.94 67.86V73.89M580.99 65.33V67.55M583.42 66.3V68.5M584.23 67.67V68.96M587.47 68.87V70.12M589.9 65.62V68.27M593.14 65.32V66.57M597.19 68.45V70.56M598 70.49V72.19M598.81 70.18V75.94M605.29 71.11V72.36M606.1 72.08V73.82M606.91 73.82V76.39M607.72 74.88V76.58M615.01 78.79V80.49M617.44 77.41V79.11M619.06 78.08V81M620.68 83.06V85.5M621.49 84.63V90.43M622.3 86.64V105.4M629.59 83.75V85.45M630.4 82.51V87.6M631.21 87.31V89.29M633.64 84.22V85.92M638.5 75.08V76.78M643.36 66.11V68.5M644.17 67.31V72.23M644.98 69.45V71.15M645.79 71.05V73.43M652.27 73.97V78.73M653.08 77.75V82.42M653.89 79.22V85.45M654.7 82.57V85.69M655.51 84.14V85.84M657.94 78.5V83.33M658.75 80.2V82.99M659.56 82.77V88.26M660.37 86.12V89.01M661.18 88.69V94.61M661.99 94.61V102.29M664.42 89.4V91.1M665.23 89.46V91.16M666.85 89.53V91.8M668.47 90.5V92.2M669.28 91.23V94.43M672.52 88.49V90.57M676.57 84.66V86.86M679 86.52V88.22M679.81 85.65V88.61M686.29 70.91V78.43M687.1 74.61V82.85M687.91 81.36V84.74M689.53 89.02V93.44M690.34 89.29V97.52M691.15 96.63V100.97M692.77 101.93V104.65M693.58 104.65V106.98M694.39 106.88V109.44M695.2 107.46V112.41M696.01 112.41V116.16M696.82 110.63V116.03M697.63 115.67V121.96M698.44 119.85V121.55M699.25 120.25V123.23M700.06 122.02V123.73M700.87 123.73V126.71M701.68 126.71V130.6M702.49 130.6V133.33M704.11 133.25V136.35M709.78 121.76V132.67M713.83 123.51V130.4M715.45 126.82V132.31M717.07 132.05V135.5M717.88 135.5V138.81M725.98 127.9V129.6M730.84 119.89V122.37M735.7 117.07V118.77M738.94 115.91V117.61M739.75 116.97V119.12M740.56 115.54V124M741.37 122.71V126.39M742.18 126.27V127.97M742.99 126.92V130.62M746.23 127.01V129.55M748.66 129.46V131.16M749.47 130.56V132.26M750.28 132V134.17M752.71 131.08V132.78M753.52 131.93V133.63M754.33 132.81V135.29M755.14 132V133.7M757.57 132.14V136.01M759.19 132.77V136.54M760 135.73V139.9M760.81 139.9V142.73M761.62 138.79V142.8M762.43 142.8V144.68M763.24 142.83V146.17M765.67 144.35V151.29M768.1 149.42V151.12M771.34 149.08V151.8M772.15 149.4V151.1M772.96 149.56V151.26M773.77 150.02V153.61M774.58 152.78V154.48M778.63 156.3V158.12M781.87 155.37V158.95M782.68 157.49V159.19M783.49 158.81V160.8M784.3 159.54V161.3M785.11 159.31V161.09M788.35 159.19V160.89M793.21 155.01V158.2M794.02 155.29V156.99M794.83 154.39V159.93M795.64 159.61V161.31M798.07 164.29V166.23M802.93 161.49V163.19M803.74 162.51V166.39M806.17 166.89V168.72M807.79 168.06V169.77M808.6 166.51V169.55M809.41 168.68V172.97M811.84 174.98V177.14M813.46 177.85V179.91M816.7 173.73V176.39M819.94 171.3V172.55M822.37 171.66V174.32M839.38 165.04V169.45M841 168.04V173.61M844.24 168.48V169.73M846.67 169.13V173.58M847.48 169.46V173.62M848.29 173.62V177.29M849.1 174.68V176.38M849.91 175.1V176.8M851.53 176.97V178.26M853.96 178.77V181.85M857.2 178.29V180.92M859.63 175.09V177.12M868.54 172.93V174.18M869.35 174.18V175.88M873.4 172.98V174.72M878.26 166.77V168.02M879.88 167.75V170.05M882.31 166.28V168.62M883.93 167.66V168.91M885.55 169.81V172.24M887.17 171.33V172.58M890.41 169.42V170.67M892.84 170.45V171.7M894.46 171.67V173.95M897.7 171.93V176.55M898.51 175.42V178.81M899.32 178.56V180.26M901.75 178.53V179.78M908.23 179.89V181.14M915.52 179.57V180.82M917.14 180.14V181.39M936.58 171.36V173.23M938.2 171.55V173.17M939.82 170.45V172.16M941.44 170.14V171.39M943.87 170.96V172.21M944.68 171.59V172.84M946.3 171.2V172.89M952.78 164.95V166.2M956.83 164.58V166.53M957.64 166.53V168.38M958.45 168.38V170.54M960.88 171.1V172.35" stroke="#1a86f0"/><path d="M20.47 79.55V80.8M23.71 79.36V80.61M27.76 76.1V77.96M29.38 74.74V75.99M56.11 73.18V74.43M58.54 70.32V72.63M62.59 74.15V75.87M65.02 74.41V76.83M67.45 78.86V80.56M71.5 96.28V98.85M72.31 90.89V96.28M73.12 83.96V93.79M73.93 77.97V83.96M74.74 70.08V77.97M76.36 67.21V72.22M77.17 67.23V68.93M77.98 62.88V67.29M78.79 63.87V66.05M80.41 65.33V67.03M82.84 63.7V68.76M83.65 61.92V64.94M85.27 61.34V65.31M87.7 65.27V66.97M89.32 65.58V67.28M90.13 65.33V67.03M90.94 61.98V66.15M91.75 63.05V65.11M93.37 60.53V63.05M94.99 61.54V64.4M98.23 68.31V70.25M101.47 69.8V71.5M104.71 71.34V73.04M107.95 74.75V76.45M109.57 76.35V78.05M111.19 75.46V78.19M112.81 77.98V79.68M113.62 77.38V80.36M124.15 98.76V100.46M127.39 101.13V104.78M129.82 100.05V102.4M130.63 97.89V100.05M131.44 95.5V100.92M132.25 89.93V95.96M133.06 85.69V90.96M133.87 79.09V86.86M137.92 79.41V81.2M138.73 75.74V81.81M139.54 76.82V78.52M140.35 76.07V77.77M141.16 73.75V76.27M141.97 69.71V73.75M142.78 65.42V69.71M143.59 57.82V67.54M153.31 90.19V91.89M154.93 89.36V91.06M155.74 88.78V91.98M156.55 86.87V91.16M157.36 85.68V87.38M158.17 84.76V86.46M159.79 84.07V86.79M161.41 86.4V89.15M169.51 98.5V103.51M171.13 97.38V101.67M171.94 94.26V97.38M172.75 92.05V97.04M180.04 94.93V96.93M180.85 92.37V97.09M181.66 93.17V94.87M182.47 92.31V94.01M183.28 91.18V92.88M184.09 88.28V91.35M184.9 87.14V88.84M185.71 83.68V88.05M188.95 85.62V87.32M189.76 83.99V87.81M192.19 84.59V86.29M193 84.18V85.88M194.62 82.2V85.54M199.48 83.89V85.59M201.1 84.41V86.11M202.72 82.13V85.9M203.53 81.81V85.85M204.34 78.22V81.81M205.15 79.7V83.34M205.96 78.34V80.04M206.77 76.13V80.64M207.58 76.01V77.71M208.39 75.62V77.95M209.2 73.05V75.62M210.01 68.35V76.03M210.82 68.76V71.94M211.63 67.13V72.41M212.44 67.94V69.64M213.25 66.85V68.55M214.06 65.36V67.55M214.87 65V68.1M217.3 61.58V64.68M218.11 56.28V61.58M221.35 62.98V65.02M225.4 61.59V64.95M227.02 60.15V64.04M228.64 60.29V64.9M230.26 58.87V62.37M233.5 59.2V61.14M235.12 56.62V58.32M235.93 56.95V59.04M236.74 55.74V58.34M241.6 64.4V67.7M246.46 67.19V71.4M247.27 66.24V67.94M248.89 63.87V66.4M252.13 64.82V67.76M252.94 64.57V66.87M253.75 63.11V64.81M255.37 64.09V66.29M261.04 60.75V63.44M267.52 68.25V69.83M270.76 67.28V69.36M275.62 73.59V75.39M276.43 72.21V75.32M277.24 69.67V72.92M288.58 69.6V72.75M291.01 73.31V74.56M297.49 74.95V76.2M307.21 69.66V72.05M314.5 70.65V74.78M316.12 71.84V73.09M321.79 73.67V75.37M329.08 63.49V67.72M345.28 77.6V78.85M351.76 83.81V85.06M353.38 83.34V85.29M355.81 77.61V79.31M356.62 75.45V78.12M358.24 76.65V78.86M359.05 75.71V79.96M361.48 78.44V80.87M365.53 77.22V80.14M372.01 82.13V84.01M374.44 85.17V86.42M378.49 86.21V90.25M380.92 84.32V87.08M384.97 69.23V92.8M385.78 61.44V69.23M386.59 59.03V61.44M389.83 69.46V72.15M393.88 72.87V74.84M398.74 74.65V80.29M406.03 75.42V76.67M406.84 74.88V76.13M417.37 73.17V74.49M427.09 74.42V75.67M436.81 74.99V76.43M444.1 74.22V75.47M450.58 68.8V71.1M454.63 66.87V69.05M457.87 69.13V70.49M465.97 65.03V66.59M471.64 63.31V64.88M474.88 63.21V66.6M478.12 61.01V63.75M480.55 58.75V61.09M487.84 56.81V59.99M488.65 57.06V59.68M491.08 53.31V54.91M498.37 56.58V57.83M502.42 54.98V56.28M503.23 54.16V55.41M504.85 53.09V54.34M508.09 55.37V56.62M509.71 54.61V55.86M511.33 55.75V57M512.95 56.73V58.54M513.76 55.38V57.97M515.38 55.78V58.08M517 56.06V57.47M517.81 54.69V56.39M518.62 53.87V56.46M519.43 50.64V55.89M520.24 48.3V55.26M521.05 49.33V51.35M524.29 46.48V48.35M528.34 50.11V53.01M536.44 54.73V56.38M538.06 54.31V57.26M538.87 54.08V55.81M540.49 52.94V54.84M548.59 54.06V55.4M551.02 55.39V56.64M574.51 63.92V65.62M578.56 70.87V74.21M594.76 66.34V68.04M595.57 66.28V67.98M602.86 72.22V74.48M603.67 70.15V72.22M610.96 78.33V79.58M613.39 79.01V80.46M616.63 77.2V79.2M618.25 76.73V78.45M623.92 99.79V104.81M624.73 98.09V101.94M625.54 92.81V98.09M627.16 83.08V91.1M627.97 78.61V84.61M632.02 87.58V90.24M632.83 85.27V87.58M634.45 77.98V85.71M635.26 79.94V83.71M636.07 76.29V80.71M636.88 77.77V81.1M637.69 75.9V80.9M639.31 75.36V78.33M640.12 74.09V75.79M640.93 70.4V74.53M641.74 66.63V70.4M642.55 65.47V69.2M647.41 73.74V76.27M648.22 70.22V73.74M649.84 69.99V71.69M657.13 78.5V80.5M662.8 94.6V101.85M663.61 89.91V94.6M670.09 90.74V92.44M670.9 87V91.37M671.71 85.73V88.97M673.33 87.43V90.3M675.76 83.54V87.17M678.19 87.02V90.03M681.43 87.95V91.11M682.24 86.15V87.95M683.05 82.58V88.94M683.86 81.07V84.16M684.67 76.6V81.07M685.48 70.91V76.76M704.92 130.1V135.17M705.73 127.38V132.87M706.54 121.05V127.38M707.35 119.45V122.32M708.16 115.65V119.45M710.59 131.27V132.97M711.4 130.62V132.32M712.21 126.26V131.13M716.26 130.63V132.33M720.31 132.26V134.94M721.12 130.4V135.37M721.93 127.49V130.4M722.74 128.24V129.94M723.55 127.51V129.21M727.6 125.87V127.6M728.41 124.14V125.87M729.22 119V124.14M730.03 119.89V123.81M731.65 119.34V123.14M734.89 117.48V119.69M737.32 115.61V119.73M738.13 116V117.7M744.61 126.84V128.54M751.9 131.22V132.92M758.38 133.29V136.27M764.86 145.86V147.56M767.29 148.57V150.74M768.91 149.87V151.57M770.53 149.08V152.33M777.01 158.09V159.79M777.82 157.38V159.08M779.44 155.98V158.12M780.25 155.67V157.73M781.06 153.29V155.67M786.73 161.82V163.52M789.16 158.81V160.51M789.97 156.84V159.24M790.78 155.09V156.84M792.4 154.28V156.46M805.36 166.26V167.96M806.98 167.5V169.2M814.27 176.33V178.48M817.51 172.56V174.39M820.75 171.12V174.26M823.18 173.37V175.07M829.66 174.65V179.48M832.09 174.11V175.93M832.9 172.96V175M835.33 170.16V172.76M836.14 167.98V170.71M836.95 165.31V168.78M837.76 162.47V165.44M841.81 170.7V173.2M843.43 167.22V171.27M845.05 167.82V169.31M855.58 180.62V181.87M858.82 176.24V180.77M860.44 175.87V177.57M861.25 175.65V177.35M863.68 172.3V173.55M865.3 171.24V172.49M872.59 172.57V174.79M875.02 169.84V172.54M896.08 172.33V174.03M896.89 171.57V173.27M921.19 179.11V180.36M923.62 177.68V179.02M931.72 168.25V170.6M937.39 171.55V173.87M940.63 170.57V171.85M947.11 171.17V172.42M947.92 169.18V172.87M953.59 164.62V165.87M963.31 170.32V171.57M964.93 167.34V169.74M965.74 166.41V167.66" stroke="#ff1a1a"/></g>
<g clip-path="url(#cp1)" fill="none" stroke-width="1.1"><path d="M54.22 222.86V223.96M61.51 221.76V222.86M66.37 225.06V226.16M67.99 220.35V221.45M69.61 220.54V221.64M73.66 232.09V233.19M74.47 234.82V235.92M76.09 230.28V231.38M80.95 220.79V221.89M81.76 220.02V221.12M82.57 221.64V222.74M85 220.28V221.38M87.43 217.28V218.38M88.24 219.29V220.39M89.05 218.35V219.45M92.29 222.68V223.78M96.34 223.54V224.64M97.15 226.01V227.11M99.58 228.1V229.2M101.2 227.47V228.57M103.63 227.02V228.12M108.49 226.49V227.59M112.54 237.51V238.61M115.78 231.58V232.68M121.45 237.73V238.83M131.98 236.18V237.28M132.79 235.38V236.48M134.41 234.88V235.98M135.22 235.97V237.07M136.03 237.52V238.62M144.13 234.65V235.75M149.8 237.64V238.74M151.42 238.42V239.52M156.28 237.25V238.35M157.09 238.14V239.24M158.71 238.96V240.06M159.52 238.93V240.03M160.33 239.83V240.93M161.95 239.33V240.43M162.76 239.25V240.35M170.86 252.01V253.11M171.67 250.39V251.49M172.48 249.92V251.02M174.91 251.47V252.57M177.34 258.26V259.36M180.58 254.79V255.89M184.63 259.38V260.48M185.44 258.65V259.75M187.06 258.35V259.45M187.87 257.32V258.42M188.68 257.1V258.2M194.35 243.44V244.54M195.16 246.68V247.78M197.59 248.84V249.94M203.26 255.99V257.09M204.07 257.08V258.18M207.31 255.23V256.33M208.93 255.58V256.68M209.74 256.03V257.13M210.55 256.28V257.38M211.36 256.12V257.22M212.17 257.15V258.25M212.98 256.36V257.46M215.41 253.91V255.01M218.65 251.31V252.41M219.46 252.25V253.35M220.27 254.36V255.46M221.89 256.7V257.8M222.7 256.34V257.44M223.51 256.72V257.82M225.94 257.09V258.19M226.75 256.58V257.68M228.37 257.1V258.2M229.18 257.58V258.68M231.61 261.82V262.92M236.47 255.55V256.65M237.28 252.96V254.06M240.52 252.28V253.38M241.33 252.3V253.4M242.14 252.71V253.81M243.76 256.55V257.65M244.57 256.53V257.63M245.38 253.39V254.49M246.19 252.28V253.38M248.62 252.62V253.72M250.24 252.69V253.79M251.05 252.75V253.85M252.67 251.37V252.47M256.72 249.76V250.86M257.53 250.75V251.85M259.15 251.3V252.4M260.77 252.74V253.84M261.58 252.36V253.46M262.39 252.38V253.48M264.01 254.1V255.2M264.82 254.76V255.86M266.44 253.82V254.92M267.25 253.46V254.56M268.06 253.44V254.54M270.49 253.41V254.51M271.3 253.95V255.05M272.92 255V256.1M276.97 257V258.1M277.78 259.07V260.17M278.59 259.93V261.03M279.4 260.13V261.23M284.26 260.75V261.85M286.69 259.66V260.76M289.12 258.84V259.94M290.74 258.87V259.97M294.79 260.06V261.16M295.6 262.05V263.15M297.22 262.43V263.53M302.08 264.43V265.53M302.89 265.58V266.68M308.56 267.77V268.87M309.37 266.08V267.18M310.18 267.45V268.55M310.99 268.15V269.25M311.8 267.51V268.61M314.23 268.81V269.91M316.66 270.71V271.81M318.28 270.39V271.49M319.09 271.28V272.38M324.76 260.33V261.43M325.57 259.76V260.86M327.19 257.54V258.64M336.91 265.22V266.32M338.53 264.71V265.81M339.34 266.36V267.46M340.15 265.72V266.82M342.58 268.6V269.7M345.01 269.03V270.13M346.63 269.17V270.27M348.25 270.27V271.37M350.68 267.5V268.6M352.3 266.47V267.57M353.92 267.58V268.68M357.97 267.5V268.6M360.4 266.67V267.77M361.21 268.39V269.49M362.83 269.01V270.11M363.64 269.95V271.05M364.45 270.5V271.6M365.26 270.29V271.39M366.07 268.68V269.78M366.88 268.9V270M371.74 264.4V265.5M372.55 264.62V265.72M374.98 268.5V269.6M376.6 268.66V269.76M378.22 269.16V270.26M379.03 268.42V269.52M379.84 269.39V270.49M380.65 267.26V268.36M390.37 245.78V246.88M402.52 231.92V233.02M403.33 231.74V232.84M404.95 232.46V233.56M406.57 233.84V234.94M409 234.93V236.03M409.81 234.95V236.05M413.05 236.94V238.04M413.86 236.36V237.46M414.67 237.76V238.86M416.29 237.6V238.7M419.53 234.24V235.34M422.77 222.39V223.49M423.58 224.79V225.89M424.39 225.68V226.78M425.2 225.56V226.66M428.44 228.05V229.15M429.25 228.49V229.59M430.87 227.37V228.47M431.68 227.57V228.67M432.49 226.65V227.75M434.92 224.72V225.82M437.35 218.92V220.02M438.97 216.29V217.39M440.59 214.46V215.56M447.07 223.95V225.05M449.5 223.8V224.9M450.31 224.3V225.4M451.12 221.8V222.9M452.74 221.71V222.81M456.79 220.34V221.44M457.6 222.52V223.62M461.65 218.79V219.89M463.27 217.56V218.66M464.89 219.38V220.48M465.7 218.38V219.48M467.32 221.15V222.25M468.13 220.08V221.18M471.37 219.93V221.03M472.18 220.33V221.43M473.8 218.55V219.65M474.61 216.89V217.99M477.85 213.43V214.53M478.66 215.91V217.01M481.09 222.17V223.27M483.52 221.98V223.08M490 224.27V225.37M490.81 224.51V225.61M496.48 223.95V225.05M498.1 225.93V227.03M498.91 225.42V226.52M501.34 225.31V226.41M502.96 225.51V226.61M503.77 224.87V225.97M504.58 225.06V226.16M507.82 226.14V227.24M509.44 228.59V229.69M510.25 229.82V230.92M512.68 229.22V230.32M513.49 228.92V230.02M514.3 228.2V229.3M515.92 229.03V230.13M517.54 227.38V228.48M520.78 225.92V227.02M522.4 224.96V226.06M523.21 225.1V226.2M524.02 225.99V227.09M525.64 225.38V226.48M528.07 225.33V226.43M532.93 229.47V230.57M533.74 229.09V230.19M536.17 231.83V232.93M536.98 232.93V234.03M540.22 224.03V225.13M547.51 228.58V229.68M549.13 227.27V228.37M556.42 226.94V228.04M558.85 226.41V227.51M561.28 225.87V226.97M563.71 225.02V226.12M570.19 227.64V228.74M572.62 231.72V232.82M573.43 231.43V232.53M577.48 232.18V233.28M579.91 229.09V230.19M582.34 226.87V227.97M583.15 227.09V228.19M585.58 225.17V226.27M588.01 224.48V225.58M588.82 224.35V225.45M592.87 225.45V226.55M593.68 225.12V226.22M596.11 228.6V229.7M599.35 229.5V230.6M603.4 225.37V226.47M604.21 224.25V225.35M609.88 221.37V222.47M612.31 218.36V219.46M628.51 231.56V232.66M632.56 234.32V235.42M634.99 234.6V235.7M636.61 233.87V234.97M638.23 232.48V233.58M639.04 232.46V233.56M639.85 230.95V232.05M642.28 229.89V230.99M643.09 230.5V231.6M644.71 232.19V233.29M645.52 234.77V235.87M653.62 244.81V245.91M654.43 245.17V246.27M660.91 242.61V243.71M662.53 240.62V241.72M664.96 237.7V238.8M666.58 237.25V238.35M674.68 250.58V251.68M676.3 249.98V251.08M680.35 250.69V251.79M684.4 251.5V252.6M690.88 260.86V261.96M694.93 268.38V269.48M704.65 272.84V273.94M707.08 270.28V271.38M714.37 289.15V290.25M717.61 295.91V297.01M733.81 288.2V289.3M750.82 303.62V304.72M757.3 306.43V307.53M759.73 306.53V307.63M761.35 296.89V297.99M762.16 297.8V298.9M762.97 298.52V299.62M765.4 301.33V302.43M766.21 303.03V304.13M770.26 305.63V306.73M772.69 304.99V306.09M775.93 303.72V304.82M777.55 303.48V304.58M779.17 304.85V305.95M780.79 305.93V307.03M783.22 305.98V307.08M784.03 307.55V308.65M785.65 309.48V310.58M791.32 312.09V313.19M792.13 311.5V312.6M792.94 309.6V310.7M799.42 331.37V332.47M801.04 328.32V329.42M805.09 324.09V325.19M809.14 325.16V326.26M809.95 325.61V326.71M811.57 325.88V326.98M815.62 328.34V329.44M817.24 330.38V331.48M818.86 329.62V330.72M820.48 328.24V329.34M822.1 326.36V327.46M822.91 326.29V327.39M825.34 325.02V326.12M831.01 326.69V327.79M836.68 328.81V329.91M838.3 329.45V330.55M842.35 334.43V335.53M843.97 336.6V337.7M856.93 352.16V353.26M857.74 349.5V350.6M859.36 350.15V351.25M861.79 349.79V350.89M862.6 348.17V349.27M863.41 348.61V349.71M865.84 347.49V348.59M866.65 346.67V347.77M869.89 344.48V345.58M871.51 343.95V345.05M872.32 344.75V345.85M873.13 343.85V344.95M873.94 343.61V344.71M874.75 345.13V346.23M877.99 343.28V344.38M879.61 341.02V342.12M882.85 340.7V341.8M883.66 340.27V341.37M884.47 341.62V342.72M885.28 344.64V345.74M890.95 342.53V343.63M894.19 342.81V343.91M895.81 342.78V343.88M896.62 343.48V344.58M898.24 342.57V343.67M899.05 343.42V344.52M899.86 342.95V344.05M900.67 343.36V344.46M901.48 343.99V345.09M903.1 344.02V345.12M904.72 343.17V344.27M910.39 335.13V336.23M912.01 337.11V338.21M915.25 341.77V342.87M917.68 339.76V340.86M922.54 339.71V340.81M924.16 338.39V339.49M929.02 331.48V332.58M930.64 323.82V324.92M933.88 316.7V317.8M935.5 314.69V315.79M939.55 322.67V323.77M943.6 321.88V322.98M944.41 322.58V323.68M945.22 321.96V323.06M946.03 322.03V323.13M946.84 321.82V322.92M947.65 322.82V323.92M948.46 321.98V323.08M952.51 322.71V323.81M953.32 323.05V324.15M954.94 325.7V326.8M958.18 327.68V328.78M959.8 329.03V330.13M960.61 330.52V331.62M963.04 332.76V333.86M964.66 333.69V334.79M13.4 222.7V223.8M20 220.2V221.3M23.4 222.7V223.8M30.5 223.9V225M44.2 225.2V226.3M45.9 227.7V228.8M966.9 318.6V319.8" stroke="#ead868"/><path d="M58.27 218.3V222.21M59.89 220.21V222.02M62.32 220.64V223.37M63.13 220.68V225.04M63.94 223.89V225.44M65.56 222.7V225.72M70.42 219.53V222.65M71.23 222.65V225.25M72.85 223.78V230.74M89.86 218.84V220.09M90.67 219.62V222.77M91.48 220.15V222.09M93.91 221.81V223.06M94.72 221.49V224.71M95.53 223.59V226.2M98.77 224.39V226.27M102.01 228.02V229.37M104.44 225.85V228.49M106.87 226.35V227.6M109.3 226.73V231.91M111.73 234.05V238.48M117.4 230.89V232.14M118.21 231.96V236.03M119.83 237.9V242.2M122.26 237.97V239.22M124.69 236.71V237.96M126.31 236.13V239.2M127.93 237.09V242.71M133.6 235.93V239.09M137.65 237.98V240.29M139.27 240.19V241.5M144.94 234.95V236.55M145.75 236.55V240.13M146.56 238.34V240.26M150.61 237.96V239.21M154.66 236.1V237.35M155.47 237.19V240.08M163.57 239.8V242.07M166 239.68V246.72M166.81 246.7V248.4M167.62 248.37V250.1M170.05 250.73V253.63M174.1 247.47V249.69M176.53 255.14V261.07M181.39 255.34V259.8M182.2 257.96V261.91M191.11 252.05V257.37M198.4 249.39V253.18M199.21 249.55V252.37M200.83 251.22V255.83M201.64 254.31V256.48M213.79 256.91V260.21M221.08 254.91V257.19M224.32 255.2V260.73M227.56 256.89V258.14M230.8 258.75V261.68M234.04 258.3V262.72M247.81 249.5V252.63M255.91 249.91V251.69M258.34 250.9V252.15M263.2 252.5V254.6M265.63 254.35V256.33M272.11 252.9V255.11M273.73 253.24V257.44M281.83 260.42V262.42M285.07 261.16V262.56M287.5 260.21V261.6M292.36 259V261.38M293.17 259.31V262.95M293.98 260.71V261.96M296.41 262.32V263.57M299.65 261.15V264.94M304.51 264.8V267.62M315.85 268.15V269.73M323.95 261.78V265.28M328.81 257.77V260.07M331.24 259.86V263.79M332.05 261.96V264.16M332.86 263.71V266.14M333.67 265.63V266.88M334.48 266.36V267.94M340.96 265V269.82M341.77 268.19V269.44M344.2 267.67V269.54M347.44 269.35V270.6M349.87 268.24V269.49M356.35 265.73V267.64M357.16 266.46V267.71M358.78 267.48V268.9M373.36 265.17V266.95M374.17 266.58V267.83M382.27 263.08V266.93M383.89 265.71V267.41M387.13 231.43V242.26M388.75 241.26V243.37M389.56 239.32V245.87M391.99 244.88V249.48M392.8 244.26V247.95M393.61 244.07V248.23M398.47 232.95V234.68M404.14 232.29V233.73M405.76 231.25V234.71M418.72 233.05V234.75M426.01 226.11V229.12M441.4 214.55V216.91M442.21 215.99V221.31M443.83 217.98V225.68M444.64 222.54V225.35M446.26 225.16V227.78M451.93 222.35V224.76M468.94 220.11V222.31M480.28 218.36V221.47M481.9 221.94V223.41M485.14 220.06V223.57M526.45 225V226.63M595.3 226.69V228.79M613.93 216.65V222.57M635.8 233.92V236.65M643.9 228.54V233.24M646.33 233.25V239.95M647.14 235.22V239.1M648.76 233.27V243.12M650.38 239.17V240.87M651.19 240.65V243.37M655.24 245.69V246.94M661.72 242.59V243.84M665.77 238.25V240.37M667.39 235.82V242.45M668.2 240.22V241.47M670.63 240.73V242.43M671.44 239.73V245.9M673.06 242.72V246.12M678.73 250.46V251.94M685.21 252.05V255.23M689.26 256.55V260.23M691.69 259.5V262.94M692.5 262.53V264.23M698.17 263.35V270.83M700.6 273.17V278.25M701.41 278.25V280.14M703.03 274.87V276.57M706.27 272.75V275.74M707.89 270.33V272.48M710.32 276.88V280.74M711.13 274.6V283.57M711.94 278.83V281.32M712.75 281.13V283.99M715.18 288.25V295.33M715.99 290.33V296.07M716.8 295.02V299.9M718.42 296.46V299.88M719.23 297.13V300.96M720.04 295.29V306.57M722.47 318.32V320.02M728.95 284.28V289.06M732.19 282.54V287.96M733 286.32V288.14M734.62 287.96V289.66M735.43 288.87V291.13M738.67 281.91V285.31M744.34 289.29V291.99M747.58 292.8V300.79M748.39 296.71V301.33M749.2 300.59V302.29M750.01 298.77V303.15M752.44 301.05V309.39M754.06 306.68V308.38M758.92 305.34V307.04M763.78 299.07V303.53M768.64 303.67V306.13M769.45 301.58V304.98M774.31 302.39V304.88M779.98 304.34V306.04M787.27 309.37V310.62M789.7 311.04V314.01M794.56 310.68V312.38M795.37 309.33V315.96M796.99 319.59V326.27M798.61 326.15V330.37M803.47 325.98V329.64M808.33 320.89V324.97M813.19 325.79V328.31M814 328.31V329.71M814.81 327.29V330.4M819.67 327.66V332.06M826.96 323.26V329.49M827.77 325.01V327.83M835.87 327.29V328.54M839.11 330V336.43M843.16 333.27V337.36M846.4 337.86V339.79M847.21 337.97V343.19M848.02 339.82V341.52M848.83 341.14V344.28M850.45 349.7V354.04M851.26 354.01V355.71M852.88 350.95V352.65M853.69 351.59V356.9M854.5 353.88V357.79M855.31 357.35V360.31M858.55 349.76V351.46M892.57 342.76V344.76M937.12 315.57V321.31M938.74 318.34V326.69M950.89 321.98V323.23M956.56 324.22V326.31M958.99 326.95V331.96M30.5 223.8V225" stroke="#1a86f0"/><path d="M53.41 222.59V230.13M55.03 220.78V223.41M55.84 220.59V222.72M57.46 218.3V220.39M59.08 219.59V220.84M64.75 225.28V228.14M67.18 221.5V225.61M75.28 228.91V236.7M76.9 226.63V230.83M77.71 219.34V226.63M78.52 217.65V223.8M80.14 218.47V221.61M84.19 217.1V219.94M85.81 217.17V222.71M97.96 225.69V226.94M102.82 226.57V229.37M105.25 226.7V228.49M106.06 226.83V230.32M110.11 231.05V232.75M113.35 234.36V240.29M114.16 236.18V239.26M114.97 234.8V236.18M116.59 231.07V234.58M123.07 237.16V238.41M123.88 236.66V237.91M130.36 238.76V240.01M142.51 234.49V240.03M143.32 231.31V236.42M153.85 236.75V238.33M161.14 236.83V242.26M164.38 238.15V240.19M168.43 249.74V253M173.29 246.91V250.47M178.15 254.28V260.05M178.96 250.48V254.87M183.01 257.11V260.29M186.25 258.03V259.28M189.49 256.52V259.29M190.3 254.76V256.57M191.92 254.08V259.62M192.73 251.67V254.08M193.54 250.34V255.84M202.45 255.67V256.92M205.69 256.04V258.1M206.5 255.86V257.63M208.12 253.93V256.82M217.03 252.79V256.71M217.84 250.89V252.83M225.13 256.32V260.45M234.85 256.01V260.14M238.09 252.85V254.1M238.9 252.06V255.87M249.43 252.22V253.47M253.48 250.97V252.22M269.68 252.53V253.78M275.35 256.85V258.1M282.64 261.42V262.67M285.88 262.02V263.89M288.31 258.74V262.43M289.93 257.57V259.48M298.03 262.76V264.01M300.46 263.75V265M301.27 263.04V264.9M303.7 264.8V266.13M305.32 266.79V268.04M306.13 266.69V269.18M317.47 270.38V271.63M320.71 263.48V268.73M321.52 263.55V266.8M322.33 259.56V266.31M323.14 258.15V262.92M326.38 256.2V260.38M328 255.62V259.48M337.72 263.59V266.79M343.39 268.69V270.05M345.82 269.39V270.93M349.06 268.79V271.51M351.49 267.56V269.3M353.11 265.45V268.01M354.73 266.85V269.22M355.54 264.35V266.85M359.59 267.29V268.76M367.69 268.65V270.58M368.5 264.09V269.22M369.31 264.87V266.25M370.12 264.52V266.45M370.93 262.28V265.84M377.41 268.66V271.47M383.08 266.11V269.12M384.7 257.3V267.01M386.32 231.67V238.97M394.42 245.22V248.87M395.23 237.3V250.34M396.04 235.63V237.33M396.85 231.2V235.65M399.28 230.27V235.13M400.9 231.16V232.52M408.19 234.45V235.7M411.43 237.16V238.42M415.48 235.5V239.65M417.91 233.9V239.64M420.34 231.21V238.05M421.15 228.13V232.62M421.96 222.01V228.13M430.06 227.52V230.71M434.11 225.59V228.75M436.54 222.14V229.83M438.16 217.78V219.48M439.78 215.46V216.84M443.02 217.95V221.88M453.55 219.73V223.81M459.22 222.59V223.84M460.03 221.67V222.92M464.08 218.1V220.5M469.75 219.9V223.69M511.06 229.46V230.71M524.83 224.62V226.54M539.41 226.32V229.2M583.96 226.19V228.99M600.16 229.52V231.15M605.83 223.33V224.8M608.26 222.65V224.32M610.69 219.48V221.92M611.5 219.93V221.18M622.03 234.98V237.18M640.66 230.08V231.5M641.47 227.76V232.44M656.05 246.21V247.46M657.67 244.61V245.88M658.48 243.32V244.61M660.1 241.22V243.54M664.15 239.74V242.34M669.82 239.07V242.07M672.25 243.25V245.9M681.16 249.44V251.84M694.12 264.37V266.07M697.36 263.82V271.94M698.98 270.03V271.73M702.22 275.23V279.5M703.84 273.96V276.22M705.46 272.47V274.47M721.66 318.01V319.71M723.28 316.31V323.58M724.09 310.38V320.1M724.9 308.1V310.38M725.71 300.78V309.55M726.52 294.83V303.26M727.33 287.12V294.83M728.14 287.55V291.34M729.76 286.83V289.01M730.57 284.44V289.15M731.38 284.51V286.21M736.24 286.07V292.21M737.05 286.14V288.49M737.86 281.43V287.96M739.48 284.23V285.93M741.1 285.89V288.62M743.53 288.53V290.23M751.63 303.16V304.86M754.87 303.48V307.93M755.68 303.34V305.04M760.54 296.55V307.36M771.07 303.12V306.18M773.5 301.59V305.54M775.12 303.13V304.88M776.74 303.92V305.17M778.36 303.28V304.53M784.84 307.55V309.59M786.46 309.77V312.63M788.89 311V313.39M801.85 328.08V329.33M802.66 326.84V329.14M804.28 326.48V329.71M806.71 322.11V324.09M818.05 329.1V330.93M821.29 326.89V328.79M824.53 324.59V325.84M832.63 326.81V328.89M835.06 326.51V328.26M845.59 335.49V338.47M852.07 351.12V358.3M856.12 356.35V362.92M877.18 344.25V345.88M886.9 345.36V346.61M887.71 343.61V347.61M893.38 342.41V343.66M905.53 341.09V343.72M906.34 338.13V342.94M921.73 338.36V339.86M923.35 339.77V341.02M929.83 327.36V335M931.45 320.38V325.03M932.26 317.26V322.64M933.07 314.41V319.34M934.69 315.95V317.25M941.98 321.9V324.76M951.7 322.18V324.65M20 219.8V221.2" stroke="#ff1a1a"/></g>
<path d="M6.7 499.49L7.51 499.5L8.32 499.52L9.13 500.61L9.94 501.7L10.75 498.4L11.56 498.44L12.37 507.35L13.18 506.5L13.99 500.82L14.8 497.58L15.61 494.5L16.42 499.02L17.23 498.64L18.04 498.26L18.85 499.11L19.66 502.9L20.47 498.6L21.28 501.23L22.09 503.94L22.9 503.98L23.71 500.33L24.52 499.9L25.33 494.16L26.14 493.07L26.95 492.79L27.76 492.51L28.57 490.86L29.38 489.21L30.19 488.94L31 488.86L31.81 490.14L32.62 493.77L33.43 489.17L34.24 489.64L35.05 492.35L35.86 494.1L36.67 497.79L37.48 497.09L38.29 493.38L39.1 489.67L39.91 486.85L40.72 484.04L41.53 482.3L42.34 482.67L43.15 483.52L43.96 486.73L44.77 486.58L45.58 485.98L46.39 485.32L47.2 484.66L48.01 485.4L48.82 486.15L49.63 484.84L50.44 484.05L51.25 481.37L52.06 485.04L52.87 486.43L53.68 489.18L54.49 492.44L55.3 495.7L56.11 492.84L56.92 493.81L57.73 492.76L58.54 491.92L59.35 494.19L60.16 496.45L60.97 492.84L61.78 492.54L62.59 492.22L63.4 491.87L64.21 491.48L65.02 491.09L65.83 491.06L66.64 495.17L67.45 496.76L68.26 494.97L69.07 507.93L69.88 518.95L70.69 523.26L71.5 524.05L72.31 524.56L73.12 511.48L73.93 496.45L74.74 489.01L75.55 483.82L76.36 479.03L77.17 475.27L77.98 478.32L78.79 481.46L79.6 487.56L80.41 486.97L81.22 489.89L82.03 484.24L82.84 480.96L83.65 477.73L84.46 478.67L85.27 478.59L86.08 478.52L86.89 479.33L87.7 480.62L88.51 486.55L89.32 485.71L90.13 481.25L90.94 476.79L91.75 473.86L92.56 474.14L93.37 471.4L94.18 468.12L94.99 466.98L95.8 472.94L96.61 474.03L97.42 475.12L98.23 476.75L99.04 475.93L99.85 474.34L100.66 469.85L101.47 474.69L102.28 474.57L103.09 479.47L103.9 478.29L104.71 478.85L105.52 479.29L106.33 483.09L107.14 486.9L107.95 486.9L108.76 485.42L109.57 481.01L110.38 483.01L111.19 470.93L112 468.33L112.81 468.68L113.62 472.5L114.43 469.59L115.24 472.29L116.05 482.49L116.86 487.43L117.67 497.53L118.48 489.35L119.29 480.37L120.1 481.28L120.91 487.68L121.72 489.49L122.53 493.31L123.34 496.81L124.15 497.97L124.96 499.14L125.77 502.5L126.58 501.39L127.39 498.97L128.2 498.53L129.01 500.61L129.82 495.55L130.63 496.41L131.44 492.01L132.25 489.38L133.06 487.4L133.87 479.46L134.68 478.28L135.49 475.46L136.3 475.66L137.11 472.34L137.92 469.41L138.73 465.16L139.54 463.58L140.35 456.26L141.16 451.82L141.97 443.18L142.78 441.55L143.59 444.15L144.4 449.73L145.21 450.96L146.02 454.34L146.83 456.89L147.64 459.44L148.45 461.94L149.26 464.24L150.07 468.3L150.88 469.96L151.69 479.15L152.5 486.1L153.31 486.93L154.12 487.76L154.93 488.23L155.74 485.33L156.55 485.08L157.36 485.69L158.17 483.38L158.98 482.96L159.79 480.75L160.6 479.4L161.41 477.4L162.22 483.15L163.03 482.45L163.84 478.81L164.65 483.2L165.46 484.53L166.27 483.94L167.08 483.34L167.89 485.72L168.7 476.12L169.51 471.94L170.32 471.75L171.13 471.7L171.94 469.56L172.75 475.42L173.56 477.3L174.37 479.67L175.18 473.33L175.99 462.49L176.8 458.11L177.61 460.07L178.42 462.03L179.23 464.56L180.04 462.45L180.85 463.53L181.66 455.7L182.47 455.13L183.28 451.44L184.09 449.45L184.9 447.58L185.71 443.35L186.52 442.29L187.33 440.21L188.14 443.74L188.95 440.11L189.76 445.8L190.57 448.57L191.38 450.71L192.19 451.02L193 451.32L193.81 453.65L194.62 454.02L195.43 447.72L196.24 446.29L197.05 450.98L197.86 453.06L198.67 453.04L199.48 451.55L200.29 450.46L201.1 451L201.91 445.39L202.72 444.11L203.53 442.26L204.34 438.66L205.15 437.15L205.96 437.97L206.77 438.51L207.58 437L208.39 434.57L209.2 430.01L210.01 427.28L210.82 424.56L211.63 420.33L212.44 416.08L213.25 411.71L214.06 409.08L214.87 409.13L215.68 406.5L216.49 407.63L217.3 406.08L218.11 410.11L218.92 412.65L219.73 415.88L220.54 419.11L221.35 422.39L222.16 418.85L222.97 415.12L223.78 411.39L224.59 411.67L225.4 412.4L226.21 408.57L227.02 410.75L227.83 411.47L228.64 407.62L229.45 405.18L230.26 402.74L231.07 401.19L231.88 399.63L232.69 397.93L233.5 400.71L234.31 402.99L235.12 405.27L235.93 405.5L236.74 405.48L237.55 404.06L238.36 405.98L239.17 410.58L239.98 415.18L240.79 420.77L241.6 426.12L242.41 429.25L243.22 432.38L244.03 431.04L244.84 424.71L245.65 425.52L246.46 424.52L247.27 423.58L248.08 424.49L248.89 422.29L249.7 421.72L250.51 421.81L251.32 423.97L252.13 419.84L252.94 418.77L253.75 421.74L254.56 424.71L255.37 426.29L256.18 427.88L256.99 429.01L257.8 429.43L258.61 426.38L259.42 425.72L260.23 421.54L261.04 419.75L261.85 418.38L262.66 417.33L263.47 415.02L264.28 416.89L265.09 419.95L265.9 421.14L266.71 420.25L267.52 421.22L268.33 420.5L269.14 422.05L269.95 427.91L270.76 427.06L271.57 426.69L272.38 426.33L273.19 429.27L274 430.61L274.81 426.21L275.62 425.57L276.43 423.74L277.24 421.91L278.05 420.64L278.86 421.26L279.67 419.91L280.48 420.2L281.29 418.51L282.1 416.81L282.91 414.86L283.72 412.92L284.53 412.46L285.34 413.71L286.15 412.95L286.96 416.13L287.77 420.74L288.58 423.67L289.39 421.07L290.2 418.35L291.01 419.08L291.82 419.81L292.63 418.92L293.44 415.98L294.25 418.85L295.06 418.08L295.87 418.16L296.68 418.25L297.49 417.69L298.3 413.83L299.11 416.31L299.92 415.5L300.73 414.16L301.54 412.85L302.35 411L303.16 409.15L303.97 410.57L304.78 407.07L305.59 405.4L306.4 401.2L307.21 403.31L308.02 402.97L308.83 402.67L309.64 403.46L310.45 405.07L311.26 405.83L312.07 404.08L312.88 402.33L313.69 401.97L314.5 401.6L315.31 400.56L316.12 399.51L316.93 398.95L317.74 399.56L318.55 400.39L319.36 401.21L320.17 402.12L320.98 403.22L321.79 403.6L322.6 408.39L323.41 412.06L324.22 408.28L325.03 403.13L325.84 397.98L326.65 400.5L327.46 403.68L328.27 408.85L329.08 411.63L329.89 408.05L330.7 406.58L331.51 408.19L332.32 409.03L333.13 411.14L333.94 409.7L334.75 408.24L335.56 406.78L336.37 405.04L337.18 405.29L337.99 407.7L338.8 410.11L339.61 411.38L340.42 411.79L341.23 411.79L342.04 411.78L342.85 412.29L343.66 416.96L344.47 416.65L345.28 419.21L346.09 419.8L346.9 416.51L347.71 413.6L348.52 407.65L349.33 403.96L350.14 411.18L350.95 416.6L351.76 422.87L352.57 427.71L353.38 424.31L354.19 421.42L355 418.53L355.81 413.22L356.62 413.32L357.43 411.27L358.24 412.41L359.05 412.51L359.86 412.62L360.67 412.79L361.48 412.51L362.29 412.39L363.1 412.28L363.91 413L364.72 416.33L365.53 415.57L366.34 412.47L367.15 415.27L367.96 417.9L368.77 419.75L369.58 421.88L370.39 425.59L371.2 432.56L372.01 432.47L372.82 433.89L373.63 430.93L374.44 427.98L375.25 429.03L376.06 423.5L376.87 431.56L377.68 431.14L378.49 426.87L379.3 424.11L380.11 423.1L380.92 422.09L381.73 419.69L382.54 424.22L383.35 426.93L384.16 420.79L384.97 423.92L385.78 442.51L386.59 455.7L387.4 448.82L388.21 443.64L389.02 442.15L389.83 442.62L390.64 443.09L391.45 442.21L392.26 441.33L393.07 441.53L393.88 444.45L394.69 447.19L395.5 456.44L396.31 459.52L397.12 467.47L397.93 469.45L398.74 468.18L399.55 464.68L400.36 462.55L401.17 466.21L401.98 469.87L402.79 473.12L403.6 475.62L404.41 473.43L405.22 471.37L406.03 473.68L406.84 475.99L407.65 477.69L408.46 473.3L409.27 469.28L410.08 465.26L410.89 463.29L411.7 461.79L412.51 460.89L413.32 459.99L414.13 459.6L414.94 460.73L415.75 462.45L416.56 464.16L417.37 464.59L418.18 467.31L418.99 473.38L419.8 475.21L420.61 481.79L421.42 484.78L422.23 488.96L423.04 490.09L423.85 485.89L424.66 484.04L425.47 480.6L426.28 478.18L427.09 477.31L427.9 477.07L428.71 487.06L429.52 490.31L430.33 491.42L431.14 487.38L431.95 485.29L432.76 488.53L433.57 486.6L434.38 487.45L435.19 489.68L436 492.83L436.81 495.69L437.62 498.67L438.43 503.26L439.24 506.44L440.05 506.48L440.86 504.82L441.67 504.07L442.48 497.9L443.29 492.35L444.1 489.61L444.91 489.58L445.72 489.56L446.53 488.51L447.34 486.37L448.15 482.26L448.96 484.89L449.77 483.56L450.58 483.14L451.39 481.97L452.2 480.81L453.01 485.17L453.82 488.26L454.63 483.27L455.44 487.83L456.25 487.51L457.06 483.45L457.87 481.26L458.68 481.22L459.49 484.15L460.3 483.48L461.11 485.78L461.92 489.22L462.73 493.6L463.54 491.7L464.35 490.52L465.16 487.42L465.97 486.54L466.78 485.66L467.59 484.09L468.4 482.53L469.21 482.85L470.02 483.16L470.83 480.39L471.64 477.22L472.45 473.88L473.26 475.63L474.07 480.96L474.88 481.3L475.69 483.14L476.5 486.61L477.31 484.59L478.12 488.1L478.93 492.05L479.74 485.65L480.55 478.37L481.36 471.84L482.17 472.4L482.98 474.03L483.79 473.48L484.6 471.18L485.41 465.94L486.22 465.83L487.03 465.13L487.84 464.43L488.65 458.52L489.46 457.71L490.27 455.96L491.08 454.56L491.89 455.48L492.7 456.39L493.51 456.72L494.32 459.33L495.13 463.76L495.94 462.84L496.75 458.73L497.56 457.81L498.37 456.32L499.18 454.93L499.99 453L500.8 458.24L501.61 458.44L502.42 457.21L503.23 451.18L504.04 453.08L504.85 453.45L505.66 456.75L506.47 457.59L507.28 458.42L508.09 459.39L508.9 456.34L509.71 451L510.52 448.76L511.33 449.64L512.14 450.53L512.95 451.38L513.76 451.82L514.57 451.53L515.38 451.23L516.19 452.89L517 454.01L517.81 451.43L518.62 448.86L519.43 445.42L520.24 446.63L521.05 445.38L521.86 445.62L522.67 439.02L523.48 443.42L524.29 445.04L525.1 446.65L525.91 445.06L526.72 448.69L527.53 448.14L528.34 448.99L529.15 449.68L529.96 450.37L530.77 450.97L531.58 451.56L532.39 448.57L533.2 447.63L534.01 448.13L534.82 449.81L535.63 448.88L536.44 446.54L537.25 442.21L538.06 436.13L538.87 441.43L539.68 446.55L540.49 451.57L541.3 455.06L542.11 455.37L542.92 455.67L543.73 453.62L544.54 444.37L545.35 442.79L546.16 442.87L546.97 442.86L547.78 442.85L548.59 444.75L549.4 448.98L550.21 452.44L551.02 453.22L551.83 459.63L552.64 456.86L553.45 454.11L554.26 451.37L555.07 449.24L555.88 449.06L556.69 447.43L557.5 452.4L558.31 453.24L559.12 456.73L559.93 463.1L560.74 466.44L561.55 464.61L562.36 460.87L563.17 463.73L563.98 466.13L564.79 465.8L565.6 465.47L566.41 467.78L567.22 470.09L568.03 469.28L568.84 468.47L569.65 466.65L570.46 464.83L571.27 461.84L572.08 458.19L572.89 454.59L573.7 450.98L574.51 453.33L575.32 455.06L576.13 458.25L576.94 460.68L577.75 465.96L578.56 466.78L579.37 458.35L580.18 452.81L580.99 459.03L581.8 465.25L582.61 469.02L583.42 472.59L584.23 469.43L585.04 466.68L585.85 470.83L586.66 472.61L587.47 480.59L588.28 479.94L589.09 480.75L589.9 476.55L590.71 475.17L591.52 471.29L592.33 467.21L593.14 469.31L593.95 472.4L594.76 472.35L595.57 478.46L596.38 477.65L597.19 474.32L598 470.98L598.81 472.2L599.62 469.88L600.43 468.74L601.24 474.78L602.05 481.42L602.86 480.12L603.67 484.93L604.48 483.92L605.29 483.12L606.1 483.21L606.91 486.97L607.72 490.73L608.53 493.02L609.34 495.02L610.15 496.58L610.96 498.13L611.77 500.49L612.58 502.84L613.39 500.62L614.2 500.1L615.01 508.04L615.82 504.68L616.63 495.12L617.44 485.57L618.25 478.97L619.06 482.19L619.87 485.42L620.68 490.83L621.49 494.9L622.3 498.97L623.11 506.15L623.92 497.11L624.73 492.38L625.54 494.87L626.35 499.57L627.16 497.18L627.97 494.04L628.78 492L629.59 493.86L630.4 491.64L631.21 489.86L632.02 485.84L632.83 485.67L633.64 481.61L634.45 479.54L635.26 481.17L636.07 485.56L636.88 485.38L637.69 483.54L638.5 474.09L639.31 472.29L640.12 469.12L640.93 464.83L641.74 463.44L642.55 469.17L643.36 477.05L644.17 477.53L644.98 479.41L645.79 478.01L646.6 472.23L647.41 468.72L648.22 467L649.03 461.05L649.84 460.8L650.65 457.82L651.46 460.33L652.27 459.95L653.08 460.62L653.89 463.95L654.7 465.72L655.51 464.92L656.32 460.96L657.13 457.61L657.94 457.51L658.75 460.19L659.56 462.86L660.37 468.05L661.18 479.02L661.99 483.28L662.8 482.24L663.61 479.75L664.42 477.26L665.23 478.57L666.04 483.92L666.85 489.83L667.66 490.42L668.47 490.66L669.28 489.29L670.09 489.06L670.9 483.95L671.71 476.96L672.52 467.02L673.33 466.59L674.14 463.85L674.95 461.02L675.76 458.2L676.57 457.87L677.38 458.45L678.19 457.42L679 458.37L679.81 461.85L680.62 465.56L681.43 461.38L682.24 459.71L683.05 458.39L683.86 454.87L684.67 448.72L685.48 442.58L686.29 443.57L687.1 447.05L687.91 452.26L688.72 448.3L689.53 446.95L690.34 451.78L691.15 457.62L691.96 461.23L692.77 463.23L693.58 465.22L694.39 467.55L695.2 469.24L696.01 470.68L696.82 472.11L697.63 472.16L698.44 467.27L699.25 470.51L700.06 468.97L700.87 477.4L701.68 479.08L702.49 483.86L703.3 487.94L704.11 489.87L704.92 480.09L705.73 475.91L706.54 472.17L707.35 471.07L708.16 469.96L708.97 473.23L709.78 474.84L710.59 477.58L711.4 474.96L712.21 472.89L713.02 469.99L713.83 462.68L714.64 458.86L715.45 455.82L716.26 456.24L717.07 456.8L717.88 456.6L718.69 449.64L719.5 442.68L720.31 431.41L721.12 415.33L721.93 403.93L722.74 400.75L723.55 399.11L724.36 406.28L725.17 413.46L725.98 428.25L726.79 439.56L727.6 443.23L728.41 433.74L729.22 424.72L730.03 434.71L730.84 444.7L731.65 442.57L732.46 439.46L733.27 436.52L734.08 435.88L734.89 435.5L735.7 432.23L736.51 438.09L737.32 442.15L738.13 445.02L738.94 437.58L739.75 432.45L740.56 441.86L741.37 446.39L742.18 449.71L742.99 453.16L743.8 454.85L744.61 457.24L745.42 455.14L746.23 446.43L747.04 437.73L747.85 432.97L748.66 438.67L749.47 441.99L750.28 439.76L751.09 435.08L751.9 436.42L752.71 429.96L753.52 427.92L754.33 430.96L755.14 433.99L755.95 435.31L756.76 436.63L757.57 431.42L758.38 425.87L759.19 423.56L760 427.71L760.81 435.39L761.62 447.34L762.43 461.43L763.24 456.05L764.05 455.8L764.86 456.4L765.67 459.27L766.48 460.19L767.29 462.52L768.1 462.12L768.91 461.25L769.72 457.85L770.53 459.34L771.34 458.09L772.15 458.77L772.96 460.96L773.77 463.03L774.58 465.09L775.39 467.31L776.2 468.7L777.01 470.8L777.82 470.61L778.63 469.82L779.44 469.04L780.25 468.07L781.06 467.29L781.87 469.2L782.68 471.11L783.49 469L784.3 465.42L785.11 462.08L785.92 465.88L786.73 465.18L787.54 464.75L788.35 461.64L789.16 458.16L789.97 453.07L790.78 450.71L791.59 454.97L792.4 459.23L793.21 455.63L794.02 456.87L794.83 453.99L795.64 454.57L796.45 449.28L797.26 446.66L798.07 443.02L798.88 439L799.69 433.35L800.5 427.7L801.31 424.6L802.12 430.81L802.93 433.46L803.74 441L804.55 439.78L805.36 438.56L806.17 440.94L806.98 454.28L807.79 463.34L808.6 460.04L809.41 456.13L810.22 452.44L811.03 459.34L811.84 459.43L812.65 462.97L813.46 463.88L814.27 460.04L815.08 456.2L815.89 450.39L816.7 446.95L817.51 449.94L818.32 450.01L819.13 448.88L819.94 446.87L820.75 446.8L821.56 442.99L822.37 442.53L823.18 451.03L823.99 456.38L824.8 457.57L825.61 462.53L826.42 465L827.23 466.06L828.04 464.8L828.85 461.9L829.66 456.71L830.47 453.28L831.28 455.6L832.09 455.28L832.9 454.97L833.71 454.65L834.52 453.68L835.33 448.62L836.14 448.91L836.95 449.82L837.76 448.81L838.57 448.79L839.38 441.86L840.19 434.92L841 432.66L841.81 426.44L842.62 429.85L843.43 432.84L844.24 437.32L845.05 435.71L845.86 435.99L846.67 429.94L847.48 425.46L848.29 432.17L849.1 428.51L849.91 428.85L850.72 425.3L851.53 419.66L852.34 413.36L853.15 413.78L853.96 412.15L854.77 409.53L855.58 408.4L856.39 407.67L857.2 406.93L858.01 413.8L858.82 422.86L859.63 419.99L860.44 417.11L861.25 414.59L862.06 413.87L862.87 412.21L863.68 410.55L864.49 410.63L865.3 411.31L866.11 411.8L866.92 414.5L867.73 414.93L868.54 415.87L869.35 421.07L870.16 423.05L870.97 421.99L871.78 420.94L872.59 421.58L873.4 425.39L874.21 418.69L875.02 415.16L875.83 413.47L876.64 411.79L877.45 413.52L878.26 415.67L879.07 417.51L879.88 416.2L880.69 416.47L881.5 416.74L882.31 418.21L883.12 420.16L883.93 418.58L884.74 420.13L885.55 418.55L886.36 416.97L887.17 419.87L887.98 417.1L888.79 417.31L889.6 415.68L890.41 418.78L891.22 423.79L892.03 421.87L892.84 422.98L893.65 424.16L894.46 425.46L895.27 426.39L896.08 427.32L896.89 429.58L897.7 431.84L898.51 433.14L899.32 428.8L900.13 431.36L900.94 430.38L901.75 429.81L902.56 429.24L903.37 430.79L904.18 427.62L904.99 428.84L905.8 430.07L906.61 429.91L907.42 431.67L908.23 437.78L909.04 437.46L909.85 441.36L910.66 445.95L911.47 450.68L912.28 451.61L913.09 452.24L913.9 447.11L914.71 441.75L915.52 438.94L916.33 435.57L917.14 435.17L917.95 438.01L918.76 440.85L919.57 441.29L920.38 438.99L921.19 438.05L922 437.12L922.81 435.46L923.62 434.43L924.43 432.87L925.24 431.31L926.05 432.2L926.86 436.34L927.67 437.81L928.48 439.27L929.29 438.41L930.1 441.58L930.91 441.3L931.72 453.62L932.53 452.22L933.34 460.2L934.15 464.62L934.96 470.24L935.77 471.77L936.58 472.13L937.39 471.73L938.2 464.99L939.01 458.2L939.82 457.98L940.63 455.85L941.44 454.89L942.25 456.5L943.06 454.97L943.87 460.14L944.68 461.4L945.49 459.27L946.3 457.13L947.11 456.77L947.92 453.39L948.73 455.72L949.54 453.11L950.35 455.41L951.16 451.23L951.97 449.41L952.78 447.76L953.59 448.73L954.4 449.7L955.21 448.71L956.02 444.19L956.83 440.87L957.64 441.83L958.45 442.79L959.26 443.74L960.07 442.41L960.88 440.75L961.69 443.09L962.5 440.99L963.31 438.31L964.12 437.06L964.93 434.39L965.74 429.66L966.55 437.59L967.36 453.44" fill="none" stroke="#ff0a0a" stroke-width="1.75" stroke-linejoin="miter" stroke-miterlimit="6" clip-path="url(#cp2)"/>
<rect x="4" y="38.2" width="1.9" height="151.3" fill="#cdcdcd"/>
<path d="M4.4 38.7H969.4V189H4.4" stroke="#cfcfcf" stroke-width="1" fill="none"/>
<rect x="4.4" y="37.8" width="965.5" height="1.3" fill="#f2f2f2"/>
<g fill="#d2d2d2"><text x="6.8" y="47.7" font-family='"Liberation Mono","IPAGothic",monospace' font-size="9.74" textLength="19.48" lengthAdjust="spacing">時刻</text><text transform="translate(26.28 47.7) scale(0.74 1)" x="3.29 9.87 16.45 23.03 29.61 36.2" text-anchor="middle" font-family='"Liberation Sans",sans-serif' font-size="10.9">:06:00</text><text x="60.37" y="47.7" font-family='"Liberation Mono","IPAGothic",monospace' font-size="9.74" textLength="19.48" lengthAdjust="spacing">始値</text><text transform="translate(79.85 47.7) scale(0.74 1)" x="3.29 9.87 16.45 23.03 29.61 36.2 42.78" text-anchor="middle" font-family='"Liberation Sans",sans-serif' font-size="10.9">:15,900</text><text x="118.81" y="47.7" font-family='"Liberation Mono","IPAGothic",monospace' font-size="9.74" textLength="19.48" lengthAdjust="spacing">高値</text><text transform="translate(138.29 47.7) scale(0.74 1)" x="3.29 9.87 16.45 23.03 29.61 36.2 42.78" text-anchor="middle" font-family='"Liberation Sans",sans-serif' font-size="10.9">:15,900</text><text x="177.25" y="47.7" font-family='"Liberation Mono","IPAGothic",monospace' font-size="9.74" textLength="19.48" lengthAdjust="spacing">安値</text><text transform="translate(196.73 47.7) scale(0.74 1)" x="3.29 9.87 16.45 23.03 29.61 36.2 42.78" text-anchor="middle" font-family='"Liberation Sans",sans-serif' font-size="10.9">:15,900</text><text x="235.69" y="47.7" font-family='"Liberation Mono","IPAGothic",monospace' font-size="9.74" textLength="19.48" lengthAdjust="spacing">終値</text><text transform="translate(255.17 47.7) scale(0.74 1)" x="3.29 9.87 16.45 23.03 29.61 36.2 42.78" text-anchor="middle" font-family='"Liberation Sans",sans-serif' font-size="10.9">:15,900</text></g>
<g fill="#c4c4c4"><text transform="translate(9.85 197.1) scale(0.74 1)" x="3.29 9.87" text-anchor="middle" font-family='"Liberation Sans",sans-serif' font-size="10.9">04</text></g>
<g fill="#c4c4c4"><text transform="translate(31.1 197.1) scale(0.74 1)" x="3.29 9.87" text-anchor="middle" font-family='"Liberation Sans",sans-serif' font-size="10.9">05</text></g>
<g fill="#c4c4c4"><text transform="translate(69.35 197.1) scale(0.74 1)" x="3.29 9.87" text-anchor="middle" font-family='"Liberation Sans",sans-serif' font-size="10.9">09</text></g>
<g fill="#c4c4c4"><text transform="translate(117.1 197.1) scale(0.74 1)" x="3.29 9.87" text-anchor="middle" font-family='"Liberation Sans",sans-serif' font-size="10.9">10</text></g>
<g fill="#c4c4c4"><text transform="translate(165.6 197.1) scale(0.74 1)" x="3.29 9.87" text-anchor="middle" font-family='"Liberation Sans",sans-serif' font-size="10.9">11</text></g>
<g fill="#c4c4c4"><text transform="translate(214.35 197.1) scale(0.74 1)" x="3.29 9.87" text-anchor="middle" font-family='"Liberation Sans",sans-serif' font-size="10.9">12</text></g>
<g fill="#c4c4c4"><text transform="translate(260.1 197.1) scale(0.74 1)" x="3.29 9.87" text-anchor="middle" font-family='"Liberation Sans",sans-serif' font-size="10.9">13</text></g>
<g fill="#c4c4c4"><text transform="translate(306.1 197.1) scale(0.74 1)" x="3.29 9.87" text-anchor="middle" font-family='"Liberation Sans",sans-serif' font-size="10.9">14</text></g>
<g fill="#c4c4c4"><text transform="translate(352.35 197.1) scale(0.74 1)" x="3.29 9.87" text-anchor="middle" font-family='"Liberation Sans",sans-serif' font-size="10.9">15</text></g>
<g fill="#c4c4c4"><text transform="translate(385.35 197.1) scale(0.74 1)" x="3.29 9.87" text-anchor="middle" font-family='"Liberation Sans",sans-serif' font-size="10.9">17</text></g>
<g fill="#c4c4c4"><text transform="translate(432.35 197.1) scale(0.74 1)" x="3.29 9.87" text-anchor="middle" font-family='"Liberation Sans",sans-serif' font-size="10.9">18</text></g>
<g fill="#c4c4c4"><text transform="translate(476.6 197.1) scale(0.74 1)" x="3.29 9.87" text-anchor="middle" font-family='"Liberation Sans",sans-serif' font-size="10.9">19</text></g>
<g fill="#c4c4c4"><text transform="translate(521.6 197.1) scale(0.74 1)" x="3.29 9.87" text-anchor="middle" font-family='"Liberation Sans",sans-serif' font-size="10.9">20</text></g>
<g fill="#c4c4c4"><text transform="translate(566.6 197.1) scale(0.74 1)" x="3.29 9.87" text-anchor="middle" font-family='"Liberation Sans",sans-serif' font-size="10.9">21</text></g>
<g fill="#c4c4c4"><text transform="translate(613.85 197.1) scale(0.74 1)" x="3.29 9.87" text-anchor="middle" font-family='"Liberation Sans",sans-serif' font-size="10.9">22</text></g>
<g fill="#c4c4c4"><text transform="translate(661.35 197.1) scale(0.74 1)" x="3.29 9.87" text-anchor="middle" font-family='"Liberation Sans",sans-serif' font-size="10.9">23</text></g>
<g fill="#c4c4c4"><text transform="translate(708.85 197.1) scale(0.74 1)" x="3.29 9.87" text-anchor="middle" font-family='"Liberation Sans",sans-serif' font-size="10.9">00</text></g>
<g fill="#c4c4c4"><text transform="translate(754.8 197.1) scale(0.74 1)" x="3.29 9.87" text-anchor="middle" font-family='"Liberation Sans",sans-serif' font-size="10.9">01</text></g>
<g fill="#c4c4c4"><text transform="translate(803.1 197.1) scale(0.74 1)" x="3.29 9.87" text-anchor="middle" font-family='"Liberation Sans",sans-serif' font-size="10.9">02</text></g>
<g fill="#c4c4c4"><text transform="translate(851.7 197.1) scale(0.74 1)" x="3.29 9.87" text-anchor="middle" font-family='"Liberation Sans",sans-serif' font-size="10.9">03</text></g>
<g fill="#c4c4c4"><text transform="translate(890.1 197.1) scale(0.74 1)" x="3.29 9.87" text-anchor="middle" font-family='"Liberation Sans",sans-serif' font-size="10.9">04</text></g>
<g fill="#c4c4c4"><text transform="translate(931.2 197.1) scale(0.74 1)" x="3.29 9.87" text-anchor="middle" font-family='"Liberation Sans",sans-serif' font-size="10.9">05</text></g>
<g fill="#ffffff"><text transform="translate(43.4 197.1) scale(0.74 1)" x="3.29 9.87" text-anchor="middle" font-family='"Liberation Sans",sans-serif' font-size="10.9" font-weight="bold">06</text></g>
<g fill="#c4c4c4"><text transform="translate(953.8 197.1) scale(0.74 1)" x="3.29 9.87" text-anchor="middle" font-family='"Liberation Sans",sans-serif' font-size="10.9">06</text></g>
<g fill="#c4c4c4"><text transform="translate(708.8 184.6) scale(0.74 1)" x="3.29 9.87" text-anchor="middle" font-family='"Liberation Sans",sans-serif' font-size="10.9">20</text></g>
<g clip-path="url(#cp0)">
<g fill="#c4c4c4"><text transform="translate(970.6 70.35) scale(0.74 1)" x="3.29 9.87 16.45 23.03 29.61 36.2" text-anchor="middle" font-family='"Liberation Sans",sans-serif' font-size="10.9">16,000</text></g>
<g fill="#c4c4c4"><text transform="translate(970.6 116.6) scale(0.74 1)" x="3.29 9.87 16.45 23.03 29.61 36.2" text-anchor="middle" font-family='"Liberation Sans",sans-serif' font-size="10.9">15,950</text></g>
<g fill="#c4c4c4"><text transform="translate(970.6 163.2) scale(0.74 1)" x="3.29 9.87 16.45 23.03 29.61 36.2" text-anchor="middle" font-family='"Liberation Sans",sans-serif' font-size="10.9">15,900</text></g>
</g>
<rect x="969.4" y="157.4" width="47.6" height="16.5" fill="#dfdfdf"/>
<g fill="#000000" stroke="#000000" stroke-width="0.35"><text transform="translate(978.38 168.2) scale(0.74 1)" x="3.29 9.87 16.45 23.03 29.61 36.2" text-anchor="middle" font-family='"Liberation Sans",sans-serif' font-size="10.9" font-weight="bold">15,900</text></g>
<rect x="4" y="205.5" width="1.9" height="165.3" fill="#cdcdcd"/>
<path d="M4.4 206H969.4V370.3H4.4" stroke="#cfcfcf" stroke-width="1" fill="none"/>
<g fill="#d2d2d2"><text x="6.8" y="215" font-family='"Liberation Mono","IPAGothic",monospace' font-size="9.74" textLength="19.48" lengthAdjust="spacing">時刻</text><text transform="translate(26.28 215) scale(0.74 1)" x="3.29 9.87 16.45 23.03 29.61 36.2" text-anchor="middle" font-family='"Liberation Sans",sans-serif' font-size="10.9">:06:00</text><text x="60.37" y="215" font-family='"Liberation Mono","IPAGothic",monospace' font-size="9.74" textLength="19.48" lengthAdjust="spacing">始値</text><text transform="translate(79.85 215) scale(0.74 1)" x="3.29 9.87 16.45 23.03 29.61 36.2" text-anchor="middle" font-family='"Liberation Sans",sans-serif' font-size="10.9">:5,788</text><text x="113.94" y="215" font-family='"Liberation Mono","IPAGothic",monospace' font-size="9.74" textLength="19.48" lengthAdjust="spacing">高値</text><text transform="translate(133.42 215) scale(0.74 1)" x="3.29 9.87 16.45 23.03 29.61 36.2" text-anchor="middle" font-family='"Liberation Sans",sans-serif' font-size="10.9">:5,788</text><text x="167.51" y="215" font-family='"Liberation Mono","IPAGothic",monospace' font-size="9.74" textLength="19.48" lengthAdjust="spacing">安値</text><text transform="translate(186.99 215) scale(0.74 1)" x="3.29 9.87 16.45 23.03 29.61 36.2" text-anchor="middle" font-family='"Liberation Sans",sans-serif' font-size="10.9">:5,788</text><text x="221.08" y="215" font-family='"Liberation Mono","IPAGothic",monospace' font-size="9.74" textLength="19.48" lengthAdjust="spacing">終値</text><text transform="translate(240.56 215) scale(0.74 1)" x="3.29 9.87 16.45 23.03 29.61 36.2" text-anchor="middle" font-family='"Liberation Sans",sans-serif' font-size="10.9">:5,788</text></g>
<g fill="#c4c4c4"><text transform="translate(9.85 377.5) scale(0.74 1)" x="3.29 9.87" text-anchor="middle" font-family='"Liberation Sans",sans-serif' font-size="10.9">04</text></g>
<g fill="#c4c4c4"><text transform="translate(31.1 377.5) scale(0.74 1)" x="3.29 9.87" text-anchor="middle" font-family='"Liberation Sans",sans-serif' font-size="10.9">05</text></g>
<g fill="#c4c4c4"><text transform="translate(69.35 377.5) scale(0.74 1)" x="3.29 9.87" text-anchor="middle" font-family='"Liberation Sans",sans-serif' font-size="10.9">09</text></g>
<g fill="#c4c4c4"><text transform="translate(117.1 377.5) scale(0.74 1)" x="3.29 9.87" text-anchor="middle" font-family='"Liberation Sans",sans-serif' font-size="10.9">10</text></g>
<g fill="#c4c4c4"><text transform="translate(165.6 377.5) scale(0.74 1)" x="3.29 9.87" text-anchor="middle" font-family='"Liberation Sans",sans-serif' font-size="10.9">11</text></g>
<g fill="#c4c4c4"><text transform="translate(214.35 377.5) scale(0.74 1)" x="3.29 9.87" text-anchor="middle" font-family='"Liberation Sans",sans-serif' font-size="10.9">12</text></g>
<g fill="#c4c4c4"><text transform="translate(260.1 377.5) scale(0.74 1)" x="3.29 9.87" text-anchor="middle" font-family='"Liberation Sans",sans-serif' font-size="10.9">13</text></g>
<g fill="#c4c4c4"><text transform="translate(306.1 377.5) scale(0.74 1)" x="3.29 9.87" text-anchor="middle" font-family='"Liberation Sans",sans-serif' font-size="10.9">14</text></g>
<g fill="#c4c4c4"><text transform="translate(352.35 377.5) scale(0.74 1)" x="3.29 9.87" text-anchor="middle" font-family='"Liberation Sans",sans-serif' font-size="10.9">15</text></g>
<g fill="#c4c4c4"><text transform="translate(385.35 377.5) scale(0.74 1)" x="3.29 9.87" text-anchor="middle" font-family='"Liberation Sans",sans-serif' font-size="10.9">17</text></g>
<g fill="#c4c4c4"><text transform="translate(432.35 377.5) scale(0.74 1)" x="3.29 9.87" text-anchor="middle" font-family='"Liberation Sans",sans-serif' font-size="10.9">18</text></g>
<g fill="#c4c4c4"><text transform="translate(476.6 377.5) scale(0.74 1)" x="3.29 9.87" text-anchor="middle" font-family='"Liberation Sans",sans-serif' font-size="10.9">19</text></g>
<g fill="#c4c4c4"><text transform="translate(521.6 377.5) scale(0.74 1)" x="3.29 9.87" text-anchor="middle" font-family='"Liberation Sans",sans-serif' font-size="10.9">20</text></g>
<g fill="#c4c4c4"><text transform="translate(566.6 377.5) scale(0.74 1)" x="3.29 9.87" text-anchor="middle" font-family='"Liberation Sans",sans-serif' font-size="10.9">21</text></g>
<g fill="#c4c4c4"><text transform="translate(613.85 377.5) scale(0.74 1)" x="3.29 9.87" text-anchor="middle" font-family='"Liberation Sans",sans-serif' font-size="10.9">22</text></g>
<g fill="#c4c4c4"><text transform="translate(661.35 377.5) scale(0.74 1)" x="3.29 9.87" text-anchor="middle" font-family='"Liberation Sans",sans-serif' font-size="10.9">23</text></g>
<g fill="#c4c4c4"><text transform="translate(708.85 377.5) scale(0.74 1)" x="3.29 9.87" text-anchor="middle" font-family='"Liberation Sans",sans-serif' font-size="10.9">00</text></g>
<g fill="#c4c4c4"><text transform="translate(754.8 377.5) scale(0.74 1)" x="3.29 9.87" text-anchor="middle" font-family='"Liberation Sans",sans-serif' font-size="10.9">01</text></g>
<g fill="#c4c4c4"><text transform="translate(803.1 377.5) scale(0.74 1)" x="3.29 9.87" text-anchor="middle" font-family='"Liberation Sans",sans-serif' font-size="10.9">02</text></g>
<g fill="#c4c4c4"><text transform="translate(851.7 377.5) scale(0.74 1)" x="3.29 9.87" text-anchor="middle" font-family='"Liberation Sans",sans-serif' font-size="10.9">03</text></g>
<g fill="#c4c4c4"><text transform="translate(890.1 377.5) scale(0.74 1)" x="3.29 9.87" text-anchor="middle" font-family='"Liberation Sans",sans-serif' font-size="10.9">04</text></g>
<g fill="#c4c4c4"><text transform="translate(931.2 377.5) scale(0.74 1)" x="3.29 9.87" text-anchor="middle" font-family='"Liberation Sans",sans-serif' font-size="10.9">05</text></g>
<g fill="#ffffff"><text transform="translate(43.4 377.5) scale(0.74 1)" x="3.29 9.87" text-anchor="middle" font-family='"Liberation Sans",sans-serif' font-size="10.9" font-weight="bold">06</text></g>
<g fill="#c4c4c4"><text transform="translate(953.8 377.5) scale(0.74 1)" x="3.29 9.87" text-anchor="middle" font-family='"Liberation Sans",sans-serif' font-size="10.9">06</text></g>
<g fill="#c4c4c4"><text transform="translate(708.8 365.9) scale(0.74 1)" x="3.29 9.87" text-anchor="middle" font-family='"Liberation Sans",sans-serif' font-size="10.9">20</text></g>
<g clip-path="url(#cp1)">
<g fill="#c4c4c4"><text transform="translate(970.6 228.7) scale(0.74 1)" x="3.29 9.87 16.45 23.03 29.61" text-anchor="middle" font-family='"Liberation Sans",sans-serif' font-size="10.9">5,900</text></g>
<g fill="#c4c4c4"><text transform="translate(970.6 268.2) scale(0.74 1)" x="3.29 9.87 16.45 23.03 29.61" text-anchor="middle" font-family='"Liberation Sans",sans-serif' font-size="10.9">5,850</text></g>
<g fill="#c4c4c4"><text transform="translate(970.6 307.8) scale(0.74 1)" x="3.29 9.87 16.45 23.03 29.61" text-anchor="middle" font-family='"Liberation Sans",sans-serif' font-size="10.9">5,800</text></g>
<g fill="#c4c4c4"><text transform="translate(970.6 347.8) scale(0.74 1)" x="3.29 9.87 16.45 23.03 29.61" text-anchor="middle" font-family='"Liberation Sans",sans-serif' font-size="10.9">5,750</text></g>
<g fill="#c4c4c4"><text transform="translate(970.6 387.4) scale(0.74 1)" x="3.29 9.87 16.45 23.03 29.61" text-anchor="middle" font-family='"Liberation Sans",sans-serif' font-size="10.9">5,700</text></g>
</g>
<rect x="969.4" y="311.5" width="47.6" height="16.5" fill="#dfdfdf"/>
<g fill="#000000" stroke="#000000" stroke-width="0.35"><text transform="translate(983.25 322.3) scale(0.74 1)" x="3.29 9.87 16.45 23.03 29.61" text-anchor="middle" font-family='"Liberation Sans",sans-serif' font-size="10.9" font-weight="bold">5,788</text></g>
<rect x="4" y="386.5" width="1.9" height="147.5" fill="#cdcdcd"/>
<path d="M4.4 387H969.4V533.5H4.4" stroke="#cfcfcf" stroke-width="1" fill="none"/>
<g fill="#d2d2d2"><text transform="translate(6.8 396) scale(0.74 1)" x="3.29" text-anchor="middle" font-family='"Liberation Sans",sans-serif' font-size="10.9">[</text><text x="11.67" y="396" font-family='"Liberation Mono","IPAGothic",monospace' font-size="9.74" textLength="9.74" lengthAdjust="spacing">金</text><text transform="translate(26.28 396) scale(0.74 1)" x="3.29 9.87 16.45 23.03 29.61" text-anchor="middle" font-family='"Liberation Sans",sans-serif' font-size="10.9">26/06</text><text transform="translate(55.5 396) scale(0.74 1)" x="3.29 9.87 16.45 23.03 29.61 36.2" text-anchor="middle" font-family='"Liberation Sans",sans-serif' font-size="10.9">15,900</text><text x="89.59" y="396.3" text-anchor="middle" font-family='"Liberation Sans",sans-serif' font-size="12.5">×</text><text transform="translate(94.46 396) scale(0.74 1)" x="3.29 9.87 16.45 23.03 29.61" text-anchor="middle" font-family='"Liberation Sans",sans-serif' font-size="10.9">1.00]</text><text x="118.81" y="396" font-family='"Liberation Mono","IPAGothic",monospace' font-size="9.74" textLength="9.74" lengthAdjust="spacing">－</text><text transform="translate(128.55 396) scale(0.74 1)" x="3.29" text-anchor="middle" font-family='"Liberation Sans",sans-serif' font-size="10.9">[</text><text x="133.42" y="396" font-family='"Liberation Mono","IPAGothic",monospace' font-size="9.74" textLength="19.48" lengthAdjust="spacing">白金</text><text transform="translate(157.77 396) scale(0.74 1)" x="3.29 9.87 16.45 23.03 29.61" text-anchor="middle" font-family='"Liberation Sans",sans-serif' font-size="10.9">26/06</text><text transform="translate(186.99 396) scale(0.74 1)" x="3.29 9.87 16.45 23.03 29.61" text-anchor="middle" font-family='"Liberation Sans",sans-serif' font-size="10.9">5,788</text><text x="216.21" y="396.3" text-anchor="middle" font-family='"Liberation Sans",sans-serif' font-size="12.5">×</text><text transform="translate(221.08 396) scale(0.74 1)" x="3.29 9.87 16.45 23.03 29.61" text-anchor="middle" font-family='"Liberation Sans",sans-serif' font-size="10.9">1.00]</text><text x="250.3" y="396" font-family='"Liberation Mono","IPAGothic",monospace' font-size="9.74" textLength="19.48" lengthAdjust="spacing">終値</text><text x="274.65" y="396" font-family='"Liberation Mono","IPAGothic",monospace' font-size="9.74" textLength="19.48" lengthAdjust="spacing">時刻</text><text transform="translate(294.13 396) scale(0.74 1)" x="3.29 9.87 16.45 23.03 29.61 36.2" text-anchor="middle" font-family='"Liberation Sans",sans-serif' font-size="10.9">:06:00</text><text transform="translate(328.22 396) scale(0.74 1)" x="3.29 9.87 16.45 23.03 29.61 36.2" text-anchor="middle" font-family='"Liberation Sans",sans-serif' font-size="10.9">10,112</text></g>
<g fill="#c4c4c4"><text transform="translate(9.85 541.6) scale(0.74 1)" x="3.29 9.87" text-anchor="middle" font-family='"Liberation Sans",sans-serif' font-size="10.9">04</text></g>
<g fill="#c4c4c4"><text transform="translate(31.1 541.6) scale(0.74 1)" x="3.29 9.87" text-anchor="middle" font-family='"Liberation Sans",sans-serif' font-size="10.9">05</text></g>
<g fill="#c4c4c4"><text transform="translate(69.35 541.6) scale(0.74 1)" x="3.29 9.87" text-anchor="middle" font-family='"Liberation Sans",sans-serif' font-size="10.9">09</text></g>
<g fill="#c4c4c4"><text transform="translate(117.1 541.6) scale(0.74 1)" x="3.29 9.87" text-anchor="middle" font-family='"Liberation Sans",sans-serif' font-size="10.9">10</text></g>
<g fill="#c4c4c4"><text transform="translate(165.6 541.6) scale(0.74 1)" x="3.29 9.87" text-anchor="middle" font-family='"Liberation Sans",sans-serif' font-size="10.9">11</text></g>
<g fill="#c4c4c4"><text transform="translate(214.35 541.6) scale(0.74 1)" x="3.29 9.87" text-anchor="middle" font-family='"Liberation Sans",sans-serif' font-size="10.9">12</text></g>
<g fill="#c4c4c4"><text transform="translate(260.1 541.6) scale(0.74 1)" x="3.29 9.87" text-anchor="middle" font-family='"Liberation Sans",sans-serif' font-size="10.9">13</text></g>
<g fill="#c4c4c4"><text transform="translate(306.1 541.6) scale(0.74 1)" x="3.29 9.87" text-anchor="middle" font-family='"Liberation Sans",sans-serif' font-size="10.9">14</text></g>
<g fill="#c4c4c4"><text transform="translate(352.35 541.6) scale(0.74 1)" x="3.29 9.87" text-anchor="middle" font-family='"Liberation Sans",sans-serif' font-size="10.9">15</text></g>
<g fill="#c4c4c4"><text transform="translate(385.35 541.6) scale(0.74 1)" x="3.29 9.87" text-anchor="middle" font-family='"Liberation Sans",sans-serif' font-size="10.9">17</text></g>
<g fill="#c4c4c4"><text transform="translate(432.35 541.6) scale(0.74 1)" x="3.29 9.87" text-anchor="middle" font-family='"Liberation Sans",sans-serif' font-size="10.9">18</text></g>
<g fill="#c4c4c4"><text transform="translate(476.6 541.6) scale(0.74 1)" x="3.29 9.87" text-anchor="middle" font-family='"Liberation Sans",sans-serif' font-size="10.9">19</text></g>
<g fill="#c4c4c4"><text transform="translate(521.6 541.6) scale(0.74 1)" x="3.29 9.87" text-anchor="middle" font-family='"Liberation Sans",sans-serif' font-size="10.9">20</text></g>
<g fill="#c4c4c4"><text transform="translate(566.6 541.6) scale(0.74 1)" x="3.29 9.87" text-anchor="middle" font-family='"Liberation Sans",sans-serif' font-size="10.9">21</text></g>
<g fill="#c4c4c4"><text transform="translate(613.85 541.6) scale(0.74 1)" x="3.29 9.87" text-anchor="middle" font-family='"Liberation Sans",sans-serif' font-size="10.9">22</text></g>
<g fill="#c4c4c4"><text transform="translate(661.35 541.6) scale(0.74 1)" x="3.29 9.87" text-anchor="middle" font-family='"Liberation Sans",sans-serif' font-size="10.9">23</text></g>
<g fill="#c4c4c4"><text transform="translate(708.85 541.6) scale(0.74 1)" x="3.29 9.87" text-anchor="middle" font-family='"Liberation Sans",sans-serif' font-size="10.9">00</text></g>
<g fill="#c4c4c4"><text transform="translate(754.8 541.6) scale(0.74 1)" x="3.29 9.87" text-anchor="middle" font-family='"Liberation Sans",sans-serif' font-size="10.9">01</text></g>
<g fill="#c4c4c4"><text transform="translate(803.1 541.6) scale(0.74 1)" x="3.29 9.87" text-anchor="middle" font-family='"Liberation Sans",sans-serif' font-size="10.9">02</text></g>
<g fill="#c4c4c4"><text transform="translate(851.7 541.6) scale(0.74 1)" x="3.29 9.87" text-anchor="middle" font-family='"Liberation Sans",sans-serif' font-size="10.9">03</text></g>
<g fill="#c4c4c4"><text transform="translate(890.1 541.6) scale(0.74 1)" x="3.29 9.87" text-anchor="middle" font-family='"Liberation Sans",sans-serif' font-size="10.9">04</text></g>
<g fill="#c4c4c4"><text transform="translate(931.2 541.6) scale(0.74 1)" x="3.29 9.87" text-anchor="middle" font-family='"Liberation Sans",sans-serif' font-size="10.9">05</text></g>
<g fill="#ffffff"><text transform="translate(43.4 541.6) scale(0.74 1)" x="3.29 9.87" text-anchor="middle" font-family='"Liberation Sans",sans-serif' font-size="10.9" font-weight="bold">06</text></g>
<g fill="#c4c4c4"><text transform="translate(953.8 541.6) scale(0.74 1)" x="3.29 9.87" text-anchor="middle" font-family='"Liberation Sans",sans-serif' font-size="10.9">06</text></g>
<g fill="#c4c4c4"><text transform="translate(708.8 529.1) scale(0.74 1)" x="3.29 9.87" text-anchor="middle" font-family='"Liberation Sans",sans-serif' font-size="10.9">20</text></g>
<g clip-path="url(#cp2)">
<g fill="#c4c4c4"><text transform="translate(970.6 399.4) scale(0.74 1)" x="3.29 9.87 16.45 23.03 29.61 36.2" text-anchor="middle" font-family='"Liberation Sans",sans-serif' font-size="10.9">10,150</text></g>
<g fill="#c4c4c4"><text transform="translate(970.6 435.9) scale(0.74 1)" x="3.29 9.87 16.45 23.03 29.61 36.2" text-anchor="middle" font-family='"Liberation Sans",sans-serif' font-size="10.9">10,125</text></g>
<g fill="#c4c4c4"><text transform="translate(970.6 472.5) scale(0.74 1)" x="3.29 9.87 16.45 23.03 29.61 36.2" text-anchor="middle" font-family='"Liberation Sans",sans-serif' font-size="10.9">10,100</text></g>
<g fill="#c4c4c4"><text transform="translate(970.6 509) scale(0.74 1)" x="3.29 9.87 16.45 23.03 29.61 36.2" text-anchor="middle" font-family='"Liberation Sans",sans-serif' font-size="10.9">10,075</text></g>
<g fill="#c4c4c4"><text transform="translate(970.6 545.6) scale(0.74 1)" x="3.29 9.87 16.45 23.03 29.61 36.2" text-anchor="middle" font-family='"Liberation Sans",sans-serif' font-size="10.9">10,050</text></g>
</g>
<rect x="969.4" y="448.9" width="47.6" height="16.5" fill="#dfdfdf"/>
<g fill="#000000" stroke="#000000" stroke-width="0.35"><text transform="translate(978.38 459.7) scale(0.74 1)" x="3.29 9.87 16.45 23.03 29.61 36.2" text-anchor="middle" font-family='"Liberation Sans",sans-serif' font-size="10.9" font-weight="bold">10,112</text></g>
</svg>
</body>
</html>
